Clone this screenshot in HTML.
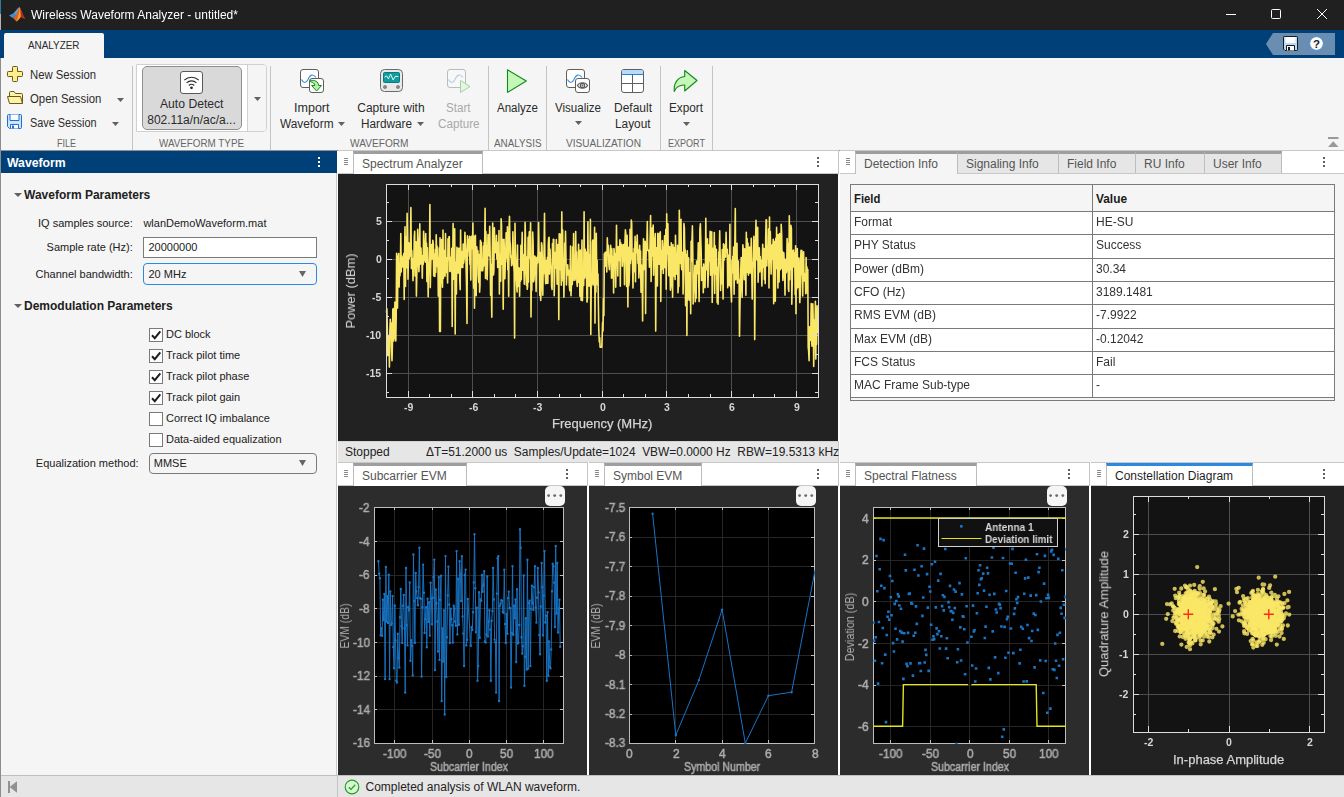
<!DOCTYPE html>
<html lang="en"><head><meta charset="utf-8"><title>Wireless Waveform Analyzer - untitled*</title>
<style>
html,body{margin:0;padding:0}
body{width:1344px;height:797px;overflow:hidden;background:#f0f0f0;font-family:"Liberation Sans",Arial,sans-serif;position:relative}
#app{position:absolute;left:0;top:0;width:1344px;height:797px;overflow:hidden;background:#fff}
.t{position:absolute;white-space:pre;line-height:14px;display:block}
.a{position:absolute;display:block;overflow:visible}
</style></head>
<body><div id="app">
<div style="position:absolute;left:0px;top:0px;width:1344px;height:30px;background:#202020"></div>
<div style="position:absolute;left:0px;top:0px;width:1px;height:14px;background:#2e7aa6"></div>
<div style="position:absolute;left:0px;top:14px;width:1px;height:16px;background:#b4b4b4"></div>
<svg class="a" style="left:8px;top:6px" width="18" height="17" viewBox="0 0 18 17"><path d="M1 9.5 L5.5 7.2 L8 9.6 L5.2 12.2 Z" fill="#3f8fd0"/><path d="M5.5 7.2 C7.5 5.6 9 2.5 11.6 0.8 L9.6 9.8 L8 9.6 Z" fill="#5aa0d8"/><path d="M11.6 0.8 C13.2 3.5 14.6 9 17 12.8 C15.4 12.4 14 11.6 12.8 10.8 C11.6 12.4 10.4 14.4 8.2 15.6 C7.6 14.2 6.4 13 5.2 12.2 C7.4 10.8 9.6 6 11.6 0.8 Z" fill="#e2621d"/><path d="M11.6 0.8 C12.6 4 13 8 12.8 10.8 C11.6 12.4 10.4 14.4 8.2 15.6 C10.4 12 11.2 6 11.6 0.8 Z" fill="#f2a02e"/><path d="M11.6 0.8 C13.2 3.5 14.6 9 17 12.8 C15.4 12.4 14 11.6 12.8 10.8 C13 8 12.6 4 11.6 0.8 Z" fill="#b5281e"/></svg>
<span class="t" style="left:31.00px;top:8.00px;font-size:12px;color:#fff;will-change:transform;">Wireless Waveform Analyzer - untitled*</span>
<div style="position:absolute;left:1226px;top:14px;width:10px;height:1px;background:#fff"></div>
<div style="position:absolute;left:1271px;top:9px;width:10px;height:10px;border:1px solid #fff;border-radius:1.5px;box-sizing:border-box"></div>
<svg class="a" style="left:1316px;top:8px" width="12" height="12" viewBox="0 0 12 12"><path d="M1 1L11 11M11 1L1 11" stroke="#fff" stroke-width="1" fill="none"/></svg>
<div style="position:absolute;left:0px;top:30px;width:1344px;height:28px;background:#004078"></div>
<div style="position:absolute;left:4px;top:33px;width:100px;height:25px;background:#f5f5f5;border-radius:2px 2px 0 0"></div>
<span class="t" style="left:28.25px;top:38.00px;font-size:11px;color:#2a2a2a;transform:scale(0.8994,1.0000);transform-origin:0 11px;">ANALYZER</span>
<svg class="a" style="left:1266px;top:33px" width="70" height="22" viewBox="0 0 70 22"><path d="M0 11L7 0H69V22H7Z" fill="#6a8eb2"/></svg>
<svg class="a" style="left:1283px;top:36px" width="15" height="15" viewBox="0 0 15 15"><path d="M1.2 0.5H13.8A0.7 0.7 0 0 1 14.5 1.2V13.8A0.7 0.7 0 0 1 13.8 14.5H2L0.5 13V1.2A0.7 0.7 0 0 1 1.2 0.5Z" fill="#b7dcfb" stroke="#1b1b1b" stroke-width="1"/><rect x="2.5" y="1" width="10" height="6" fill="#fff" stroke="#1b1b1b" stroke-width="0"/><path d="M3.5 14.5V9.5H11.5V14.5" fill="#fff" stroke="#1b1b1b" stroke-width="1"/><rect x="5" y="11" width="2" height="3.5" fill="#1b1b1b"/></svg>
<svg class="a" style="left:1309px;top:36px" width="16" height="16" viewBox="0 0 16 16"><circle cx="7.5" cy="7.5" r="6.8" fill="#fff" stroke="#3f8fe0" stroke-width="0.8"/><text x="7.5" y="11.6" font-family="Liberation Sans, sans-serif" font-size="11.5" font-weight="bold" text-anchor="middle" fill="#1b1b1b">?</text></svg>
<div style="position:absolute;left:0px;top:58px;width:1344px;height:92px;background:#f5f5f5"></div>
<div style="position:absolute;left:0px;top:150px;width:1344px;height:1px;background:#909090"></div>
<div style="position:absolute;left:0px;top:58px;width:1px;height:739px;background:#bdbdbd"></div>
<svg class="a" style="left:6px;top:65px" width="18" height="18" viewBox="0 0 18 18"><path d="M7.3 1.5H10.7A0.8 0.8 0 0 1 11.5 2.3V6.5H15.7A0.8 0.8 0 0 1 16.5 7.3V10.7A0.8 0.8 0 0 1 15.7 11.5H11.5V15.7A0.8 0.8 0 0 1 10.7 16.5H7.3A0.8 0.8 0 0 1 6.5 15.7V11.5H2.3A0.8 0.8 0 0 1 1.5 10.7V7.3A0.8 0.8 0 0 1 2.3 6.5H6.5V2.3A0.8 0.8 0 0 1 7.3 1.5Z" fill="#fdf08c" stroke="#6e5712" stroke-width="1"/></svg>
<span class="t" style="left:29.50px;top:68.00px;font-size:12px;color:#2b2b2b;transform:scale(0.9424,1.0000);transform-origin:0 11px;">New Session</span>
<svg class="a" style="left:6px;top:90px" width="18" height="15" viewBox="0 0 18 15"><path d="M3.5 7V2.5Q3.5 1.5 4.5 1.5H8L9.5 3.5H15.5Q16.5 3.5 16.5 4.5V13.5H4" fill="#fdf3a8" stroke="#6e5712" stroke-width="1" stroke-linejoin="round"/><path d="M1.5 6.5H14.5L16.5 13.5H3.5Z" fill="#fdf3a8" stroke="#6e5712" stroke-width="1" stroke-linejoin="round"/></svg>
<span class="t" style="left:29.50px;top:92.00px;font-size:12px;color:#2b2b2b;transform:scale(0.9459,1.0000);transform-origin:0 11px;">Open Session</span>
<svg class="a" style="left:116.5px;top:97.5px" width="7" height="4" viewBox="0 0 7 4"><path d="M0 0H7L3.5 4Z" fill="#616161"/></svg>
<svg class="a" style="left:7px;top:114px" width="16" height="16" viewBox="0 0 16 16"><path d="M1.5 0.5H13.5Q14.5 0.5 14.5 1.5V13.5Q14.5 14.5 13.5 14.5H2.5L0.5 12.5V1.5Q0.5 0.5 1.5 0.5Z" fill="#cde4fb" stroke="#1d6fd3" stroke-width="1"/><path d="M3 0.5V6.5H12V0.5" fill="#fff" stroke="#1d6fd3" stroke-width="1"/><path d="M3.5 14.5V10.5H11.5V14.5" fill="#fff" stroke="#1d6fd3" stroke-width="1"/><rect x="5" y="11.5" width="2" height="3" fill="#1d6fd3"/></svg>
<span class="t" style="left:29.50px;top:116.00px;font-size:12px;color:#2b2b2b;transform:scale(0.9076,1.0000);transform-origin:0 11px;">Save Session</span>
<svg class="a" style="left:111.5px;top:121.5px" width="7" height="4" viewBox="0 0 7 4"><path d="M0 0H7L3.5 4Z" fill="#616161"/></svg>
<span class="t" style="left:57.00px;top:136.00px;font-size:11px;color:#666;transform:scale(0.8179,1.0000);transform-origin:0 11px;">FILE</span>
<div style="position:absolute;left:132px;top:66px;width:1px;height:84px;background:#c4c4c4"></div>
<div style="position:absolute;left:136px;top:64px;width:131px;height:68px;background:#fff;border:1px solid #d0d0d0;border-radius:0 4px 4px 0;box-sizing:border-box"></div>
<div style="position:absolute;left:247px;top:65px;width:19px;height:66px;background:#f5f5f5;border-left:1px solid #d0d0d0;border-radius:0 3px 3px 0;box-sizing:border-box"></div>
<div style="position:absolute;left:142px;top:66px;width:100px;height:64px;background:#d9d9d9;border:1px solid #8f8f8f;border-radius:5px;box-sizing:border-box"></div>
<svg class="a" style="left:180px;top:71px" width="23" height="23" viewBox="0 0 23 23"><rect x="0.5" y="0.5" width="22" height="22" rx="2.5" fill="#fff" stroke="#5a5a5a" stroke-width="1"/><path d="M4.3 9.2A10.3 10.3 0 0 1 18.7 9.2" fill="none" stroke="#2a2a2a" stroke-width="1.1"/><path d="M6.6 11.9A7 7 0 0 1 16.4 11.9" fill="none" stroke="#2a2a2a" stroke-width="1.1"/><path d="M8.8 14.5A3.9 3.9 0 0 1 14.2 14.5" fill="none" stroke="#2a2a2a" stroke-width="1.1"/><circle cx="11.5" cy="16.8" r="1.4" fill="#2a2a2a"/></svg>
<span class="t" style="left:160.25px;top:97.00px;font-size:12px;color:#2b2b2b;transform:scale(1.0127,1.0000);transform-origin:0 11px;">Auto Detect</span>
<span class="t" style="left:147.25px;top:113.00px;font-size:12px;color:#2b2b2b;">802.11a/n/ac/a...</span>
<svg class="a" style="left:253.5px;top:97.0px" width="7" height="4" viewBox="0 0 7 4"><path d="M0 0H7L3.5 4Z" fill="#616161"/></svg>
<span class="t" style="left:159.00px;top:136.00px;font-size:11px;color:#666;transform:scale(0.8934,1.0000);transform-origin:0 11px;">WAVEFORM TYPE</span>
<div style="position:absolute;left:270px;top:66px;width:1px;height:84px;background:#c4c4c4"></div>
<svg class="a" style="left:300px;top:69px" width="24" height="24" viewBox="0 0 24 24"><rect x="0.5" y="0.5" width="18" height="18" rx="2.5" fill="#fff" stroke="#5f5f5f" stroke-width="1" opacity="1"/><path d="M1.5 10.5C3.5 14.5 6 14.5 8 10.5C10 5.5 13 4.5 16 8.5" fill="none" stroke="#3a8fe0" stroke-width="1.1" opacity="1"/><rect x="9.5" y="9.5" width="14" height="14" rx="2.5" fill="#fff" stroke="#5f5f5f" stroke-width="1"/><path d="M10.2 11.4C14.8 10.8 18.4 12.6 18.6 16.5H21.6L16.6 22L11.6 16.5H14.9C14.6 14.4 13.2 13.2 10.2 12.7Z" fill="#b6f0a8" stroke="#178a17" stroke-width="1" stroke-linejoin="round"/></svg>
<span class="t" style="left:293.75px;top:101.00px;font-size:12px;color:#2b2b2b;transform:scale(1.0439,1.0000);transform-origin:0 11px;">Import</span>
<span class="t" style="left:279.75px;top:117.00px;font-size:12px;color:#2b2b2b;transform:scale(0.9866,1.0000);transform-origin:0 11px;">Waveform</span>
<svg class="a" style="left:338.0px;top:122.0px" width="7" height="4" viewBox="0 0 7 4"><path d="M0 0H7L3.5 4Z" fill="#616161"/></svg>
<svg class="a" style="left:380px;top:69px" width="24" height="24" viewBox="0 0 24 24"><rect x="0.5" y="0.5" width="22" height="22" rx="4" fill="#e9e9e9" stroke="#6a6a6a" stroke-width="1"/><rect x="3.5" y="3.5" width="16" height="10" rx="1" fill="#0f9c9e" stroke="#0a7a80" stroke-width="1"/><path d="M4.5 8.2L6.6 6.9L8.4 9.8L10.6 5.2L13.1 10.9L15.4 7.3L18.5 7.6" fill="none" stroke="#fff" stroke-width="0.9" stroke-linejoin="round"/><circle cx="5" cy="18" r="1.6" fill="#8b8b8b" stroke="#6a6a6a" stroke-width="0.6"/><circle cx="18" cy="18" r="1.6" fill="#8b8b8b" stroke="#6a6a6a" stroke-width="0.6"/></svg>
<span class="t" style="left:357.25px;top:101.00px;font-size:12px;color:#2b2b2b;">Capture with</span>
<span class="t" style="left:361.00px;top:117.00px;font-size:12px;color:#2b2b2b;transform:scale(0.9804,1.0000);transform-origin:0 11px;">Hardware</span>
<svg class="a" style="left:416.5px;top:122.0px" width="7" height="4" viewBox="0 0 7 4"><path d="M0 0H7L3.5 4Z" fill="#616161"/></svg>
<svg class="a" style="left:447px;top:69px;opacity:.38" width="24" height="24" viewBox="0 0 24 24"><rect x="0.5" y="0.5" width="18" height="18" rx="2.5" fill="#fff" stroke="#5f5f5f" stroke-width="1" opacity="1"/><path d="M1.5 10.5C3.5 14.5 6 14.5 8 10.5C10 5.5 13 4.5 16 8.5" fill="none" stroke="#3a8fe0" stroke-width="1.1" opacity="1"/><path d="M13.5 11.5L23 17.5L13.5 23.5Z" fill="#c9f7c3" stroke="#1f9a1f" stroke-width="1"/></svg>
<span class="t" style="left:446.25px;top:101.00px;font-size:12px;color:#a9a9a9;transform:scale(0.9668,1.0000);transform-origin:0 11px;">Start</span>
<span class="t" style="left:437.75px;top:117.00px;font-size:12px;color:#a9a9a9;transform:scale(0.9721,1.0000);transform-origin:0 11px;">Capture</span>
<span class="t" style="left:350.25px;top:136.00px;font-size:11px;color:#666;transform:scale(0.9205,1.0000);transform-origin:0 11px;">WAVEFORM</span>
<div style="position:absolute;left:488px;top:66px;width:1px;height:84px;background:#c4c4c4"></div>
<svg class="a" style="left:506px;top:68px" width="22" height="26" viewBox="0 0 22 26"><path d="M1.5 1.8L20.3 13L1.5 24.4Z" fill="#c4f7b8" stroke="#108a18" stroke-width="1.1" stroke-linejoin="round"/></svg>
<span class="t" style="left:497.00px;top:101.00px;font-size:12px;color:#2b2b2b;transform:scale(0.9604,1.0000);transform-origin:0 11px;">Analyze</span>
<span class="t" style="left:493.75px;top:136.00px;font-size:11px;color:#666;transform:scale(0.8964,1.0000);transform-origin:0 11px;">ANALYSIS</span>
<div style="position:absolute;left:546px;top:66px;width:1px;height:84px;background:#c4c4c4"></div>
<svg class="a" style="left:566px;top:69px" width="24" height="24" viewBox="0 0 24 24"><rect x="0.5" y="0.5" width="18" height="18" rx="2.5" fill="#fff" stroke="#5f5f5f" stroke-width="1" opacity="1"/><path d="M1.5 10.5C3.5 14.5 6 14.5 8 10.5C10 5.5 13 4.5 16 8.5" fill="none" stroke="#3a8fe0" stroke-width="1.1" opacity="1"/><rect x="9.5" y="9.5" width="14" height="14" rx="2.5" fill="#fff" stroke="#5f5f5f" stroke-width="1"/><path d="M11.4 16.5C13.4 12.9 19.6 12.9 21.6 16.5C19.6 20.1 13.4 20.1 11.4 16.5Z" fill="#fff" stroke="#5a5a5a" stroke-width="1.1"/><circle cx="16.5" cy="16.5" r="2.1" fill="#fff" stroke="#5a5a5a" stroke-width="1.2"/><circle cx="16.5" cy="16.5" r="0.9" fill="#5a5a5a"/></svg>
<span class="t" style="left:555.00px;top:101.00px;font-size:12px;color:#2b2b2b;transform:scale(0.9622,1.0000);transform-origin:0 11px;">Visualize</span>
<svg class="a" style="left:574.5px;top:121.0px" width="7" height="4" viewBox="0 0 7 4"><path d="M0 0H7L3.5 4Z" fill="#616161"/></svg>
<svg class="a" style="left:621px;top:69px" width="24" height="24" viewBox="0 0 24 24"><rect x="0.5" y="0.5" width="22" height="23" rx="2.5" fill="#fff" stroke="#5f5f5f" stroke-width="1"/><path d="M1 3A2 2 0 0 1 3 1H20A2 2 0 0 1 22 3V5H1Z" fill="#b7dcfb"/><path d="M0.5 5.5H22.5" stroke="#2f7fd6" stroke-width="1"/><path d="M11.5 5.5V23.5M0.5 14.5H22.5" stroke="#5f5f5f" stroke-width="1"/></svg>
<span class="t" style="left:614.00px;top:101.00px;font-size:12px;color:#2b2b2b;">Default</span>
<span class="t" style="left:615.25px;top:117.00px;font-size:12px;color:#2b2b2b;transform:scale(0.9853,1.0000);transform-origin:0 11px;">Layout</span>
<span class="t" style="left:565.50px;top:136.00px;font-size:11px;color:#666;transform:scale(0.9179,1.0000);transform-origin:0 11px;">VISUALIZATION</span>
<div style="position:absolute;left:660px;top:66px;width:1px;height:84px;background:#c4c4c4"></div>
<svg class="a" style="left:673px;top:69px" width="25" height="24" viewBox="0 0 25 24"><path d="M11.7 1.5L24 11.5L11.7 22V16C6.5 15.8 3 18 1.2 22.5C0.6 14 4.5 8.2 11.7 7.5Z" fill="#c4f7b8" stroke="#108a18" stroke-width="1.1" stroke-linejoin="round"/></svg>
<span class="t" style="left:669.00px;top:101.00px;font-size:12px;color:#2b2b2b;transform:scale(0.9803,1.0000);transform-origin:0 11px;">Export</span>
<svg class="a" style="left:683.0px;top:122.0px" width="7" height="4" viewBox="0 0 7 4"><path d="M0 0H7L3.5 4Z" fill="#616161"/></svg>
<span class="t" style="left:668.00px;top:136.00px;font-size:11px;color:#666;transform:scale(0.8216,1.0000);transform-origin:0 11px;">EXPORT</span>
<div style="position:absolute;left:712px;top:66px;width:1px;height:84px;background:#c4c4c4"></div>
<svg class="a" style="left:1328px;top:137px" width="11" height="10" viewBox="0 0 11 10"><rect x="0" y="0" width="10.5" height="2" fill="#9a9a9a"/><path d="M0 10L5.25 4.2L10.5 10Z" fill="#9a9a9a"/></svg>
<div style="position:absolute;left:1px;top:151px;width:336px;height:22px;background:#004078"></div>
<span class="t" style="left:7.00px;top:156.00px;font-size:12px;color:#fff;font-weight:bold;transform:scale(1.0197,1.0000);transform-origin:0 11px;">Waveform</span>
<svg class="a" style="left:318.0px;top:157.0px" width="2" height="10" viewBox="0 0 2 10"><rect x="0" y="0" width="2" height="2" fill="#fff"/><rect x="0" y="4" width="2" height="2" fill="#fff"/><rect x="0" y="8" width="2" height="2" fill="#fff"/></svg>
<div style="position:absolute;left:1px;top:173px;width:336px;height:602px;background:#f5f5f5"></div>
<div style="position:absolute;left:336px;top:173px;width:1px;height:602px;background:#c9c9c9"></div>
<svg class="a" style="left:14.0px;top:193.0px" width="8" height="4" viewBox="0 0 8 4"><path d="M0 0H8L4.0 4Z" fill="#616161"/></svg>
<span class="t" style="left:24.00px;top:188.00px;font-size:12px;color:#212121;font-weight:bold;">Waveform Parameters</span>
<span class="t" style="left:38.04px;top:216.00px;font-size:11px;color:#212121;">IQ samples source:</span>
<span class="t" style="left:143.40px;top:216.00px;font-size:11px;color:#212121;">wlanDemoWaveform.mat</span>
<span class="t" style="left:46.60px;top:240.00px;font-size:11px;color:#212121;">Sample rate (Hz):</span>
<div style="position:absolute;left:143px;top:237px;width:174px;height:21px;background:#fff;border:1px solid #7a7a7a;box-sizing:border-box"></div>
<span class="t" style="left:148.50px;top:240.00px;font-size:11px;color:#212121;">20000000</span>
<span class="t" style="left:35.55px;top:267.00px;font-size:11px;color:#212121;">Channel bandwidth:</span>
<div style="position:absolute;left:143px;top:263px;width:174px;height:22px;background:#f5f5f5;border:1px solid #2a8ae0;border-radius:4px;box-sizing:border-box"></div>
<span class="t" style="left:148.50px;top:267.00px;font-size:11px;color:#212121;">20 MHz</span>
<svg class="a" style="left:298.5px;top:271.0px" width="7" height="6" viewBox="0 0 7 6"><path d="M0 0H7L3.5 6Z" fill="#666"/></svg>
<svg class="a" style="left:14.0px;top:304.0px" width="8" height="4" viewBox="0 0 8 4"><path d="M0 0H8L4.0 4Z" fill="#616161"/></svg>
<span class="t" style="left:24.00px;top:299.00px;font-size:12px;color:#212121;font-weight:bold;">Demodulation Parameters</span>
<div style="position:absolute;left:149px;top:328px;width:14px;height:14px;background:#fff;border:1px solid #7a7a7a;box-sizing:border-box"><svg width="12" height="12" viewBox="0 0 12 12" style="display:block"><path d="M2 6.2L4.8 9.2L10.3 2.4" fill="none" stroke="#1e1e1e" stroke-width="2"/></svg></div>
<span class="t" style="left:166.00px;top:327.00px;font-size:11px;color:#212121;">DC block</span>
<div style="position:absolute;left:149px;top:349px;width:14px;height:14px;background:#fff;border:1px solid #7a7a7a;box-sizing:border-box"><svg width="12" height="12" viewBox="0 0 12 12" style="display:block"><path d="M2 6.2L4.8 9.2L10.3 2.4" fill="none" stroke="#1e1e1e" stroke-width="2"/></svg></div>
<span class="t" style="left:166.00px;top:348.00px;font-size:11px;color:#212121;">Track pilot time</span>
<div style="position:absolute;left:149px;top:370px;width:14px;height:14px;background:#fff;border:1px solid #7a7a7a;box-sizing:border-box"><svg width="12" height="12" viewBox="0 0 12 12" style="display:block"><path d="M2 6.2L4.8 9.2L10.3 2.4" fill="none" stroke="#1e1e1e" stroke-width="2"/></svg></div>
<span class="t" style="left:166.00px;top:369.00px;font-size:11px;color:#212121;">Track pilot phase</span>
<div style="position:absolute;left:149px;top:391px;width:14px;height:14px;background:#fff;border:1px solid #7a7a7a;box-sizing:border-box"><svg width="12" height="12" viewBox="0 0 12 12" style="display:block"><path d="M2 6.2L4.8 9.2L10.3 2.4" fill="none" stroke="#1e1e1e" stroke-width="2"/></svg></div>
<span class="t" style="left:166.00px;top:390.00px;font-size:11px;color:#212121;">Track pilot gain</span>
<div style="position:absolute;left:149px;top:412px;width:14px;height:14px;background:#fff;border:1px solid #7a7a7a;box-sizing:border-box"></div>
<span class="t" style="left:166.00px;top:411.00px;font-size:11px;color:#212121;">Correct IQ imbalance</span>
<div style="position:absolute;left:149px;top:433px;width:14px;height:14px;background:#fff;border:1px solid #7a7a7a;box-sizing:border-box"></div>
<span class="t" style="left:166.00px;top:432.00px;font-size:11px;color:#212121;">Data-aided equalization</span>
<span class="t" style="left:35.86px;top:456.00px;font-size:11px;color:#212121;">Equalization method:</span>
<div style="position:absolute;left:149px;top:453px;width:168px;height:21px;background:#f5f5f5;border:1px solid #7a7a7a;border-radius:4px;box-sizing:border-box"></div>
<span class="t" style="left:153.80px;top:456.00px;font-size:11px;color:#212121;">MMSE</span>
<svg class="a" style="left:298.5px;top:460.0px" width="7" height="6" viewBox="0 0 7 6"><path d="M0 0H7L3.5 6Z" fill="#666"/></svg>
<div style="position:absolute;left:338px;top:150px;width:501px;height:1px;background:#c8c8c8"></div>
<div style="position:absolute;left:338px;top:151px;width:501px;height:23px;background:#fff;border-bottom:1px solid #c8c8c8;box-sizing:border-box"></div>
<div style="position:absolute;left:338px;top:151px;width:16px;height:22px;border-right:1px solid #c8c8c8;box-sizing:border-box"></div>
<svg class="a" style="left:344px;top:158px" width="4" height="7" viewBox="0 0 4 7"><rect x="0" y="0" width="4" height="1" fill="#8a8a8a"/><rect x="0" y="2" width="4" height="1" fill="#8a8a8a"/><rect x="0" y="4" width="4" height="1" fill="#8a8a8a"/><rect x="0" y="6" width="4" height="1" fill="#8a8a8a"/></svg>
<div style="position:absolute;left:353px;top:151px;width:130px;height:23px;background:#fff;border-left:1px solid #bdbdbd;border-right:1px solid #bdbdbd;border-top:3px solid #9e9e9e;box-sizing:border-box"></div>
<span class="t" style="left:362.00px;top:157.00px;font-size:12px;color:#555;">Spectrum Analyzer</span>
<svg class="a" style="left:817.0px;top:157.0px" width="2" height="10" viewBox="0 0 2 10"><rect x="0" y="0" width="2" height="2" fill="#606060"/><rect x="0" y="4" width="2" height="2" fill="#606060"/><rect x="0" y="8" width="2" height="2" fill="#606060"/></svg>
<div style="position:absolute;left:838px;top:151px;width:1px;height:23px;background:#c4c4c4"></div>
<svg class="a" style="left:338px;top:174px" width="500" height="267" viewBox="338 174 500 267"><rect x="338" y="174" width="500" height="267" fill="#222"/><rect x="386" y="184" width="432" height="213" fill="#131313"/><path d="M408.5 184V397M472.5 184V397M537.5 184V397M602.5 184V397M666.5 184V397M731.5 184V397M796.5 184V397M386 221.5H818M386 259.5H818M386 297.5H818M386 335.5H818M386 373.5H818" stroke="#4e4e4e" stroke-width="1" fill="none"/><polyline points="386.5,312.5 386.9,308.9 387.3,327.8 387.8,355.6 388.2,345.0 388.6,349.7 389.0,335.5 389.4,367.1 389.9,329.8 390.3,319.2 390.7,334.9 391.1,322.8 391.6,350.6 392.0,360.8 392.4,344.6 392.8,309.0 393.2,311.6 393.7,341.0 394.1,308.1 394.5,338.4 394.9,302.0 395.3,322.4 395.8,340.9 396.2,316.2 396.6,253.3 397.0,260.3 397.5,308.1 397.9,267.3 398.3,257.1 398.7,253.6 399.1,287.1 399.6,265.5 400.0,275.7 400.4,266.6 400.8,233.6 401.2,271.9 401.7,255.9 402.1,260.2 402.5,267.0 402.9,257.2 403.4,258.4 403.8,253.5 404.2,299.5 404.6,253.1 405.0,226.7 405.5,286.5 405.9,236.9 406.3,252.1 406.7,267.8 407.1,213.4 407.6,238.9 408.0,279.2 408.4,259.6 408.8,242.7 409.2,258.4 409.7,246.9 410.1,256.0 410.5,240.9 410.9,207.6 411.4,268.6 411.8,250.5 412.2,264.3 412.6,258.5 413.0,280.7 413.5,266.8 413.9,259.0 414.3,236.5 414.7,231.4 415.1,276.0 415.6,271.4 416.0,241.8 416.4,296.1 416.8,274.4 417.3,257.2 417.7,229.4 418.1,241.1 418.5,262.0 418.9,271.6 419.4,259.7 419.8,223.9 420.2,264.1 420.6,261.5 421.0,248.0 421.5,263.9 421.9,259.3 422.3,278.2 422.7,255.5 423.2,264.4 423.6,231.2 424.0,241.8 424.4,255.7 424.8,260.1 425.3,262.1 425.7,233.5 426.1,255.2 426.5,243.0 426.9,281.6 427.4,247.9 427.8,271.1 428.2,296.8 428.6,270.9 429.1,273.4 429.5,251.5 429.9,204.5 430.3,287.6 430.7,267.6 431.2,250.6 431.6,244.6 432.0,258.4 432.4,259.0 432.8,240.3 433.3,244.0 433.7,276.0 434.1,256.4 434.5,254.0 434.9,276.5 435.4,249.4 435.8,272.5 436.2,234.8 436.6,250.9 437.1,246.1 437.5,267.1 437.9,257.4 438.3,296.1 438.7,278.3 439.2,247.7 439.6,331.4 440.0,237.8 440.4,331.5 440.8,239.8 441.3,272.8 441.7,239.5 442.1,280.1 442.5,287.3 443.0,230.0 443.4,278.5 443.8,257.3 444.2,250.6 444.6,250.8 445.1,276.2 445.5,233.6 445.9,267.5 446.3,257.5 446.7,272.8 447.2,269.5 447.6,283.0 448.0,238.7 448.4,260.0 448.9,237.0 449.3,236.5 449.7,271.4 450.1,263.9 450.5,268.7 451.0,257.1 451.4,272.0 451.8,248.4 452.2,326.4 452.6,274.1 453.1,223.5 453.5,271.4 453.9,279.3 454.3,250.7 454.7,228.7 455.2,333.9 455.6,262.0 456.0,270.7 456.4,294.0 456.9,247.2 457.3,258.2 457.7,256.3 458.1,273.2 458.5,248.3 459.0,268.7 459.4,248.3 459.8,280.4 460.2,289.6 460.6,230.0 461.1,267.8 461.5,251.3 461.9,257.9 462.3,266.2 462.8,267.5 463.2,244.0 463.6,263.1 464.0,259.9 464.4,256.2 464.9,232.4 465.3,242.4 465.7,249.1 466.1,267.8 466.5,284.5 467.0,323.5 467.4,235.9 467.8,256.1 468.2,244.3 468.7,239.2 469.1,250.8 469.5,236.4 469.9,264.2 470.3,253.2 470.8,280.1 471.2,236.6 471.6,244.0 472.0,236.0 472.4,248.7 472.9,223.1 473.3,277.0 473.7,288.2 474.1,236.3 474.5,308.2 475.0,253.0 475.4,235.3 475.8,286.2 476.2,295.6 476.7,246.7 477.1,251.0 477.5,256.8 477.9,250.8 478.3,275.0 478.8,282.5 479.2,254.6 479.6,292.1 480.0,284.7 480.4,240.4 480.9,251.9 481.3,242.2 481.7,270.8 482.1,263.9 482.6,270.8 483.0,268.4 483.4,246.1 483.8,266.1 484.2,242.6 484.7,242.9 485.1,208.2 485.5,278.5 485.9,231.5 486.3,251.6 486.8,250.0 487.2,279.6 487.6,259.2 488.0,234.5 488.5,251.5 488.9,248.2 489.3,255.9 489.7,226.2 490.1,250.4 490.6,295.3 491.0,264.4 491.4,290.7 491.8,317.2 492.2,261.3 492.7,223.1 493.1,249.7 493.5,274.9 493.9,270.3 494.4,227.8 494.8,248.0 495.2,250.4 495.6,252.6 496.0,250.9 496.5,235.3 496.9,258.9 497.3,247.8 497.7,267.5 498.1,242.2 498.6,267.0 499.0,230.6 499.4,293.9 499.8,256.4 500.2,254.0 500.7,281.3 501.1,218.9 501.5,224.5 501.9,264.3 502.4,239.2 502.8,247.5 503.2,309.3 503.6,270.1 504.0,239.3 504.5,254.6 504.9,278.7 505.3,262.4 505.7,261.8 506.1,232.9 506.6,250.7 507.0,258.0 507.4,226.7 507.8,269.8 508.3,266.7 508.7,296.3 509.1,226.8 509.5,216.4 509.9,240.7 510.4,246.1 510.8,257.8 511.2,255.9 511.6,265.7 512.0,264.9 512.5,259.8 512.9,231.8 513.3,249.9 513.7,262.7 514.2,273.6 514.6,338.1 515.0,223.3 515.4,251.8 515.8,261.0 516.3,277.3 516.7,285.5 517.1,292.0 517.5,245.0 517.9,286.6 518.4,267.8 518.8,267.8 519.2,273.6 519.6,296.2 520.0,268.4 520.5,281.2 520.9,245.4 521.3,279.6 521.7,251.9 522.2,232.4 522.6,270.3 523.0,254.2 523.4,259.9 523.8,263.9 524.3,284.3 524.7,254.4 525.1,222.4 525.5,238.3 525.9,267.9 526.4,285.2 526.8,257.1 527.2,289.3 527.6,286.4 528.1,237.2 528.5,282.1 528.9,241.1 529.3,231.9 529.7,257.9 530.2,246.4 530.6,222.9 531.0,316.9 531.4,275.1 531.8,290.6 532.3,261.8 532.7,232.1 533.1,242.7 533.5,281.7 534.0,279.8 534.4,272.5 534.8,256.0 535.2,266.1 535.6,257.3 536.1,291.4 536.5,267.7 536.9,262.2 537.3,257.1 537.7,262.9 538.2,250.7 538.6,222.5 539.0,248.7 539.4,259.6 539.8,295.4 540.3,252.6 540.7,300.5 541.1,289.4 541.5,242.7 542.0,245.7 542.4,263.2 542.8,295.2 543.2,267.6 543.6,273.9 544.1,246.8 544.5,213.4 544.9,255.3 545.3,275.8 545.7,283.8 546.2,260.8 546.6,263.3 547.0,283.3 547.4,257.2 547.9,283.3 548.3,244.7 548.7,237.7 549.1,237.3 549.5,274.1 550.0,249.1 550.4,262.4 550.8,267.7 551.2,266.7 551.6,286.5 552.1,289.5 552.5,243.6 552.9,263.9 553.3,239.3 553.8,239.5 554.2,295.8 554.6,276.4 555.0,256.7 555.4,252.4 555.9,268.3 556.3,239.5 556.7,256.4 557.1,284.2 557.5,280.1 558.0,244.5 558.4,258.8 558.8,319.6 559.2,233.7 559.6,249.1 560.1,234.0 560.5,269.7 560.9,268.0 561.3,285.2 561.8,211.9 562.2,265.9 562.6,229.7 563.0,280.9 563.4,259.3 563.9,297.2 564.3,270.8 564.7,243.0 565.1,264.2 565.5,231.3 566.0,258.8 566.4,284.9 566.8,273.9 567.2,273.1 567.7,264.8 568.1,274.9 568.5,274.7 568.9,270.3 569.3,285.2 569.8,290.7 570.2,270.6 570.6,246.1 571.0,295.8 571.4,285.2 571.9,277.7 572.3,284.5 572.7,246.9 573.1,275.1 573.6,233.6 574.0,280.5 574.4,255.9 574.8,269.1 575.2,279.9 575.7,231.6 576.1,267.5 576.5,251.8 576.9,282.7 577.3,286.5 577.8,266.2 578.2,262.9 578.6,244.2 579.0,282.4 579.5,267.2 579.9,296.2 580.3,250.0 580.7,285.5 581.1,300.3 581.6,264.2 582.0,240.1 582.4,300.7 582.8,284.9 583.2,277.6 583.7,285.4 584.1,211.7 584.5,278.4 584.9,276.4 585.3,249.3 585.8,276.7 586.2,252.0 586.6,280.7 587.0,302.1 587.5,298.0 587.9,221.7 588.3,266.3 588.7,254.5 589.1,286.3 589.6,255.7 590.0,257.7 590.4,219.2 590.8,334.4 591.2,290.0 591.7,278.5 592.1,284.9 592.5,241.8 592.9,240.0 593.4,276.4 593.8,285.0 594.2,263.4 594.6,227.2 595.0,323.1 595.5,244.5 595.9,292.1 596.3,233.4 596.7,276.8 597.1,260.2 597.6,285.1 598.0,274.0 598.4,304.9 598.8,330.4 599.3,342.0 599.7,337.5 600.1,347.2 600.5,347.2 600.9,347.2 601.4,347.2 601.8,347.2 602.2,336.3 602.6,322.4 603.0,331.0 603.5,298.4 603.9,315.7 604.3,253.9 604.7,266.7 605.1,252.2 605.6,263.3 606.0,265.9 606.4,251.8 606.8,271.9 607.3,237.9 607.7,252.5 608.1,245.1 608.5,248.8 608.9,265.2 609.4,269.7 609.8,255.0 610.2,261.4 610.6,245.3 611.0,250.2 611.5,278.2 611.9,248.8 612.3,277.8 612.7,262.9 613.2,256.3 613.6,293.0 614.0,248.5 614.4,254.8 614.8,253.8 615.3,259.4 615.7,287.3 616.1,260.8 616.5,225.3 616.9,262.4 617.4,250.5 617.8,276.0 618.2,246.5 618.6,248.6 619.1,254.6 619.5,260.8 619.9,239.8 620.3,286.3 620.7,242.7 621.2,247.4 621.6,246.7 622.0,244.8 622.4,266.3 622.8,258.3 623.3,256.1 623.7,244.5 624.1,249.2 624.5,284.8 624.9,242.7 625.4,229.9 625.8,233.4 626.2,249.5 626.6,286.5 627.1,235.2 627.5,257.8 627.9,307.0 628.3,247.3 628.7,285.9 629.2,282.0 629.6,268.6 630.0,229.4 630.4,263.4 630.8,250.3 631.3,220.1 631.7,223.3 632.1,258.4 632.5,261.3 633.0,288.0 633.4,253.0 633.8,272.1 634.2,248.6 634.6,254.5 635.1,236.4 635.5,281.7 635.9,250.9 636.3,242.0 636.7,252.5 637.2,235.1 637.6,249.0 638.0,263.6 638.4,249.8 638.9,277.9 639.3,266.8 639.7,245.4 640.1,258.4 640.5,251.0 641.0,292.2 641.4,264.8 641.8,269.6 642.2,275.0 642.6,320.9 643.1,264.1 643.5,238.7 643.9,249.2 644.3,269.4 644.8,257.3 645.2,241.3 645.6,313.6 646.0,259.3 646.4,245.5 646.9,242.6 647.3,221.6 647.7,250.5 648.1,250.0 648.5,250.1 649.0,252.2 649.4,267.2 649.8,256.9 650.2,237.3 650.6,215.6 651.1,281.5 651.5,256.7 651.9,251.5 652.3,227.9 652.8,256.1 653.2,225.1 653.6,275.2 654.0,259.0 654.4,259.2 654.9,238.9 655.3,233.5 655.7,331.1 656.1,273.7 656.5,247.8 657.0,268.3 657.4,286.0 657.8,233.2 658.2,244.4 658.7,262.7 659.1,264.3 659.5,233.3 659.9,259.4 660.3,231.9 660.8,301.4 661.2,260.5 661.6,250.2 662.0,268.9 662.4,240.6 662.9,249.1 663.3,273.5 663.7,253.1 664.1,261.8 664.6,235.8 665.0,267.7 665.4,263.8 665.8,229.4 666.2,289.2 666.7,213.9 667.1,253.9 667.5,250.8 667.9,223.8 668.3,258.1 668.8,275.7 669.2,253.4 669.6,246.6 670.0,268.7 670.4,290.1 670.9,285.9 671.3,242.9 671.7,271.1 672.1,259.8 672.6,297.2 673.0,244.5 673.4,264.4 673.8,247.2 674.2,276.2 674.7,265.5 675.1,279.4 675.5,235.2 675.9,259.3 676.3,274.2 676.8,266.5 677.2,264.0 677.6,245.3 678.0,292.7 678.5,281.5 678.9,286.5 679.3,210.3 679.7,241.2 680.1,263.4 680.6,246.7 681.0,219.3 681.4,266.6 681.8,269.6 682.2,257.2 682.7,252.4 683.1,293.9 683.5,273.5 683.9,223.6 684.4,228.3 684.8,252.0 685.2,249.8 685.6,305.8 686.0,254.2 686.5,268.5 686.9,335.5 687.3,250.9 687.7,273.4 688.1,300.0 688.6,257.9 689.0,293.3 689.4,272.5 689.8,300.6 690.2,273.1 690.7,313.7 691.1,241.3 691.5,261.2 691.9,243.7 692.4,225.9 692.8,251.8 693.2,303.9 693.6,285.3 694.0,291.8 694.5,277.3 694.9,265.4 695.3,301.8 695.7,290.4 696.1,298.2 696.6,261.0 697.0,269.4 697.4,273.6 697.8,267.0 698.3,242.8 698.7,279.6 699.1,301.6 699.5,270.3 699.9,228.9 700.4,223.9 700.8,239.5 701.2,252.1 701.6,280.5 702.0,275.8 702.5,267.5 702.9,267.6 703.3,292.7 703.7,264.0 704.2,274.8 704.6,267.4 705.0,287.8 705.4,273.0 705.8,218.2 706.3,266.4 706.7,269.7 707.1,253.7 707.5,238.8 707.9,287.2 708.4,268.3 708.8,245.0 709.2,253.4 709.6,261.0 710.1,231.3 710.5,275.2 710.9,261.2 711.3,273.4 711.7,231.8 712.2,302.4 712.6,275.8 713.0,272.7 713.4,248.0 713.8,264.5 714.3,232.6 714.7,293.5 715.1,245.5 715.5,259.4 715.9,274.2 716.4,249.3 716.8,279.1 717.2,302.7 717.6,267.5 718.1,304.3 718.5,272.9 718.9,251.7 719.3,252.8 719.7,230.8 720.2,256.6 720.6,290.4 721.0,274.3 721.4,277.5 721.8,283.6 722.3,249.5 722.7,271.6 723.1,298.9 723.5,243.8 724.0,260.4 724.4,250.7 724.8,255.8 725.2,244.9 725.6,257.1 726.1,232.4 726.5,249.1 726.9,249.7 727.3,249.4 727.7,287.8 728.2,261.2 728.6,263.1 729.0,254.7 729.4,285.8 729.9,224.3 730.3,282.5 730.7,282.9 731.1,293.2 731.5,301.9 732.0,260.0 732.4,273.0 732.8,256.4 733.2,271.6 733.6,247.1 734.1,294.3 734.5,259.4 734.9,238.6 735.3,208.6 735.7,279.7 736.2,268.6 736.6,276.5 737.0,243.2 737.4,283.1 737.9,269.5 738.3,261.1 738.7,280.0 739.1,279.7 739.5,336.3 740.0,303.4 740.4,290.1 740.8,269.0 741.2,257.6 741.6,264.6 742.1,297.4 742.5,270.6 742.9,244.8 743.3,249.9 743.8,263.1 744.2,279.8 744.6,248.7 745.0,273.7 745.4,257.3 745.9,295.2 746.3,232.4 746.7,257.8 747.1,238.5 747.5,272.4 748.0,243.3 748.4,275.1 748.8,266.0 749.2,253.7 749.7,247.1 750.1,273.3 750.5,264.8 750.9,256.4 751.3,238.3 751.8,273.3 752.2,299.1 752.6,269.1 753.0,263.0 753.4,261.1 753.9,236.3 754.3,256.9 754.7,339.6 755.1,286.1 755.5,245.6 756.0,220.3 756.4,247.5 756.8,258.1 757.2,260.2 757.7,227.4 758.1,282.3 758.5,265.5 758.9,253.7 759.3,247.8 759.8,272.0 760.2,256.6 760.6,268.6 761.0,260.3 761.4,265.4 761.9,286.1 762.3,263.0 762.7,244.4 763.1,259.1 763.6,267.2 764.0,248.5 764.4,279.6 764.8,251.1 765.2,283.6 765.7,238.4 766.1,219.7 766.5,219.9 766.9,265.9 767.3,246.0 767.8,258.7 768.2,258.9 768.6,229.1 769.0,288.0 769.5,217.1 769.9,261.6 770.3,231.5 770.7,256.5 771.1,274.1 771.6,254.5 772.0,245.0 772.4,259.3 772.8,249.9 773.2,239.2 773.7,303.7 774.1,241.2 774.5,245.2 774.9,256.5 775.3,301.2 775.8,238.2 776.2,268.8 776.6,227.4 777.0,263.3 777.5,234.9 777.9,287.9 778.3,234.8 778.7,272.5 779.1,282.0 779.6,233.5 780.0,253.1 780.4,269.7 780.8,266.9 781.2,224.3 781.7,235.1 782.1,268.5 782.5,251.4 782.9,280.5 783.4,273.3 783.8,252.8 784.2,260.9 784.6,271.4 785.0,295.1 785.5,259.3 785.9,260.2 786.3,272.6 786.7,269.9 787.1,238.5 787.6,257.2 788.0,243.6 788.4,288.6 788.8,291.5 789.3,215.7 789.7,279.7 790.1,246.3 790.5,269.7 790.9,225.3 791.4,228.8 791.8,304.2 792.2,284.2 792.6,250.9 793.0,256.9 793.5,250.1 793.9,267.0 794.3,256.5 794.7,252.7 795.2,294.7 795.6,245.7 796.0,313.7 796.4,254.5 796.8,289.1 797.3,248.5 797.7,273.3 798.1,287.2 798.5,261.6 798.9,258.1 799.4,288.8 799.8,302.6 800.2,294.9 800.6,260.9 801.0,250.4 801.5,274.7 801.9,250.6 802.3,279.0 802.7,296.0 803.2,261.4 803.6,251.8 804.0,281.0 804.4,279.3 804.8,277.9 805.3,273.3 805.7,293.8 806.1,257.6 806.5,284.2 806.9,266.8 807.4,293.6 807.8,269.5 808.2,347.3 808.6,350.5 809.1,360.7 809.5,326.9 809.9,333.0 810.3,333.5 810.7,340.1 811.2,303.5 811.6,340.4 812.0,346.3 812.4,307.3 812.8,303.8 813.3,325.3 813.7,366.5 814.1,343.9 814.5,319.8 815.0,331.6 815.4,301.2 815.8,359.1 816.2,318.5 816.6,344.4 817.1,305.8 817.5,333.5" fill="none" stroke="#fbe766" stroke-width="1.6" stroke-linejoin="round"/><path d="M408.5 397v-6M408.5 184v6M429.5 397v-3M429.5 184v3M451.5 397v-3M451.5 184v3M472.5 397v-6M472.5 184v6M494.5 397v-3M494.5 184v3M515.5 397v-3M515.5 184v3M537.5 397v-6M537.5 184v6M559.5 397v-3M559.5 184v3M580.5 397v-3M580.5 184v3M602.5 397v-6M602.5 184v6M623.5 397v-3M623.5 184v3M645.5 397v-3M645.5 184v3M666.5 397v-6M666.5 184v6M688.5 397v-3M688.5 184v3M710.5 397v-3M710.5 184v3M731.5 397v-6M731.5 184v6M753.5 397v-3M753.5 184v3M774.5 397v-3M774.5 184v3M796.5 397v-6M796.5 184v6M386 392.5h3M818 392.5h-3M386 373.5h6M818 373.5h-6M386 354.5h3M818 354.5h-3M386 335.5h6M818 335.5h-6M386 316.5h3M818 316.5h-3M386 297.5h6M818 297.5h-6M386 278.5h3M818 278.5h-3M386 259.5h6M818 259.5h-6M386 240.5h3M818 240.5h-3M386 221.5h6M818 221.5h-6M386 202.5h3M818 202.5h-3" stroke="#dcdcdc" stroke-width="1" fill="none"/><rect x="386.5" y="184.5" width="432" height="213" fill="none" stroke="#dcdcdc" stroke-width="1"/></svg>
<span class="t" style="left:403.90px;top:399.50px;font-size:10.5px;color:#d6d6d6;font-weight:bold;will-change:transform;">-9</span>
<span class="t" style="left:468.61px;top:399.50px;font-size:10.5px;color:#d6d6d6;font-weight:bold;will-change:transform;">-6</span>
<span class="t" style="left:533.32px;top:399.50px;font-size:10.5px;color:#d6d6d6;font-weight:bold;will-change:transform;">-3</span>
<span class="t" style="left:599.78px;top:399.50px;font-size:10.5px;color:#d6d6d6;font-weight:bold;will-change:transform;">0</span>
<span class="t" style="left:664.49px;top:399.50px;font-size:10.5px;color:#d6d6d6;font-weight:bold;will-change:transform;">3</span>
<span class="t" style="left:729.20px;top:399.50px;font-size:10.5px;color:#d6d6d6;font-weight:bold;will-change:transform;">6</span>
<span class="t" style="left:793.91px;top:399.50px;font-size:10.5px;color:#d6d6d6;font-weight:bold;will-change:transform;">9</span>
<span class="t" style="left:375.66px;top:214.00px;font-size:10.5px;color:#d6d6d6;font-weight:bold;will-change:transform;">5</span>
<span class="t" style="left:375.66px;top:252.10px;font-size:10.5px;color:#d6d6d6;font-weight:bold;will-change:transform;">0</span>
<span class="t" style="left:372.16px;top:290.20px;font-size:10.5px;color:#d6d6d6;font-weight:bold;will-change:transform;">-5</span>
<span class="t" style="left:366.32px;top:328.30px;font-size:10.5px;color:#d6d6d6;font-weight:bold;will-change:transform;">-10</span>
<span class="t" style="left:366.32px;top:366.40px;font-size:10.5px;color:#d6d6d6;font-weight:bold;will-change:transform;">-15</span>
<span class="t" style="left:552.25px;top:417.00px;font-size:13px;color:#d4d4d4;-webkit-text-stroke:0.25px currentColor;will-change:transform;">Frequency (MHz)</span>
<span class="t" style="left:313.27px;top:283.50px;font-size:13px;color:#d8d8d8;transform:rotate(-90deg) scale(0.9888,1);transform-origin:50% 50%;will-change:transform;">Power (dBm)</span>
<div style="position:absolute;left:338px;top:441px;width:500px;height:21px;background:#e6e6e6;border-top:1px solid #d4d4d4;box-sizing:border-box"></div>
<div style="position:absolute;left:838px;top:441px;width:1px;height:21px;background:#c4c4c4"></div>
<span class="t" style="left:345.00px;top:445.00px;font-size:12px;color:#222;">Stopped</span>
<span class="t" style="left:425.50px;top:445.00px;font-size:12px;color:#222;transform:scale(0.9938,1.0000);transform-origin:0 11px;">ΔT=51.2000 us  Samples/Update=1024  VBW=0.0000 Hz  RBW=19.5313 kHz</span>
<div style="position:absolute;left:840px;top:151px;width:504px;height:311px;background:#f5f5f5"></div>
<div style="position:absolute;left:840px;top:150px;width:505px;height:1px;background:#c8c8c8"></div>
<div style="position:absolute;left:840px;top:151px;width:505px;height:23px;background:#fff;border-bottom:1px solid #c8c8c8;box-sizing:border-box"></div>
<div style="position:absolute;left:840px;top:151px;width:16px;height:22px;border-right:1px solid #c8c8c8;box-sizing:border-box"></div>
<svg class="a" style="left:846px;top:158px" width="4" height="7" viewBox="0 0 4 7"><rect x="0" y="0" width="4" height="1" fill="#8a8a8a"/><rect x="0" y="2" width="4" height="1" fill="#8a8a8a"/><rect x="0" y="4" width="4" height="1" fill="#8a8a8a"/><rect x="0" y="6" width="4" height="1" fill="#8a8a8a"/></svg>
<div style="position:absolute;left:855px;top:151px;width:103px;height:23px;background:#f5f5f5;border-left:1px solid #bdbdbd;border-right:1px solid #bdbdbd;border-top:3px solid #9e9e9e;box-sizing:border-box"></div>
<span class="t" style="left:864.00px;top:157.00px;font-size:12px;color:#555;">Detection Info</span>
<div style="position:absolute;left:958px;top:151px;width:101px;height:22px;background:#e6e6e6;border-right:1px solid #bdbdbd;border-top:3px solid #9e9e9e;box-sizing:border-box"></div>
<span class="t" style="left:966.00px;top:157.00px;font-size:12px;color:#555;">Signaling Info</span>
<div style="position:absolute;left:1059px;top:151px;width:77px;height:22px;background:#e6e6e6;border-right:1px solid #bdbdbd;border-top:3px solid #9e9e9e;box-sizing:border-box"></div>
<span class="t" style="left:1067.00px;top:157.00px;font-size:12px;color:#555;">Field Info</span>
<div style="position:absolute;left:1136px;top:151px;width:69px;height:22px;background:#e6e6e6;border-right:1px solid #bdbdbd;border-top:3px solid #9e9e9e;box-sizing:border-box"></div>
<span class="t" style="left:1144.00px;top:157.00px;font-size:12px;color:#555;">RU Info</span>
<div style="position:absolute;left:1205px;top:151px;width:77px;height:22px;background:#e6e6e6;border-right:1px solid #bdbdbd;border-top:3px solid #9e9e9e;box-sizing:border-box"></div>
<span class="t" style="left:1213.00px;top:157.00px;font-size:12px;color:#555;">User Info</span>
<svg class="a" style="left:1323.0px;top:157.0px" width="2" height="10" viewBox="0 0 2 10"><rect x="0" y="0" width="2" height="2" fill="#606060"/><rect x="0" y="4" width="2" height="2" fill="#606060"/><rect x="0" y="8" width="2" height="2" fill="#606060"/></svg>
<div style="position:absolute;left:1344px;top:151px;width:1px;height:23px;background:#c4c4c4"></div>
<div style="position:absolute;left:850px;top:184px;width:485px;height:217px;background:#fff;border:1px solid #7a7a7a;box-sizing:border-box"></div>
<div style="position:absolute;left:851px;top:185px;width:483px;height:26px;background:#f5f5f5"></div>
<div style="position:absolute;left:850px;top:211px;width:485px;height:1px;background:#7a7a7a"></div>
<div style="position:absolute;left:850px;top:234px;width:485px;height:1px;background:#7a7a7a"></div>
<div style="position:absolute;left:850px;top:258px;width:485px;height:1px;background:#7a7a7a"></div>
<div style="position:absolute;left:850px;top:281px;width:485px;height:1px;background:#7a7a7a"></div>
<div style="position:absolute;left:850px;top:304px;width:485px;height:1px;background:#7a7a7a"></div>
<div style="position:absolute;left:850px;top:328px;width:485px;height:1px;background:#7a7a7a"></div>
<div style="position:absolute;left:850px;top:351px;width:485px;height:1px;background:#7a7a7a"></div>
<div style="position:absolute;left:850px;top:374px;width:485px;height:1px;background:#7a7a7a"></div>
<div style="position:absolute;left:850px;top:397px;width:485px;height:1px;background:#7a7a7a"></div>
<div style="position:absolute;left:1092px;top:184px;width:1px;height:214px;background:#7a7a7a"></div>
<div style="position:absolute;left:851px;top:398px;width:483px;height:2px;background:#f5f5f5"></div>
<span class="t" style="left:854.30px;top:192.00px;font-size:12px;color:#1a1a1a;font-weight:bold;transform:scale(0.9392,1.0000);transform-origin:0 11px;">Field</span>
<span class="t" style="left:1096.30px;top:192.00px;font-size:12px;color:#1a1a1a;font-weight:bold;transform:scale(0.9887,1.0000);transform-origin:0 11px;">Value</span>
<span class="t" style="left:854.30px;top:215.00px;font-size:12px;color:#333;will-change:transform;">Format</span>
<span class="t" style="left:1096.30px;top:215.00px;font-size:12px;color:#333;will-change:transform;">HE-SU</span>
<span class="t" style="left:854.30px;top:238.00px;font-size:12px;color:#333;will-change:transform;">PHY Status</span>
<span class="t" style="left:1096.30px;top:238.00px;font-size:12px;color:#333;will-change:transform;">Success</span>
<span class="t" style="left:854.30px;top:262.00px;font-size:12px;color:#333;will-change:transform;">Power (dBm)</span>
<span class="t" style="left:1096.30px;top:262.00px;font-size:12px;color:#333;will-change:transform;">30.34</span>
<span class="t" style="left:854.30px;top:285.00px;font-size:12px;color:#333;will-change:transform;">CFO (Hz)</span>
<span class="t" style="left:1096.30px;top:285.00px;font-size:12px;color:#333;will-change:transform;">3189.1481</span>
<span class="t" style="left:854.30px;top:308.00px;font-size:12px;color:#333;will-change:transform;">RMS EVM (dB)</span>
<span class="t" style="left:1096.30px;top:308.00px;font-size:12px;color:#333;will-change:transform;">-7.9922</span>
<span class="t" style="left:854.30px;top:332.00px;font-size:12px;color:#333;will-change:transform;">Max EVM (dB)</span>
<span class="t" style="left:1096.30px;top:332.00px;font-size:12px;color:#333;will-change:transform;">-0.12042</span>
<span class="t" style="left:854.30px;top:355.00px;font-size:12px;color:#333;will-change:transform;">FCS Status</span>
<span class="t" style="left:1096.30px;top:355.00px;font-size:12px;color:#333;will-change:transform;">Fail</span>
<span class="t" style="left:854.30px;top:378.00px;font-size:12px;color:#333;will-change:transform;">MAC Frame Sub-type</span>
<span class="t" style="left:1096.30px;top:378.00px;font-size:12px;color:#333;will-change:transform;">-</span>
<div style="position:absolute;left:338px;top:462px;width:250px;height:1px;background:#c8c8c8"></div>
<div style="position:absolute;left:338px;top:463px;width:250px;height:23px;background:#fff;border-bottom:1px solid #c8c8c8;box-sizing:border-box"></div>
<div style="position:absolute;left:338px;top:463px;width:16px;height:22px;border-right:1px solid #c8c8c8;box-sizing:border-box"></div>
<svg class="a" style="left:344px;top:470px" width="4" height="7" viewBox="0 0 4 7"><rect x="0" y="0" width="4" height="1" fill="#8a8a8a"/><rect x="0" y="2" width="4" height="1" fill="#8a8a8a"/><rect x="0" y="4" width="4" height="1" fill="#8a8a8a"/><rect x="0" y="6" width="4" height="1" fill="#8a8a8a"/></svg>
<div style="position:absolute;left:353px;top:463px;width:114px;height:23px;background:#fff;border-left:1px solid #bdbdbd;border-right:1px solid #bdbdbd;border-top:3px solid #9e9e9e;box-sizing:border-box"></div>
<span class="t" style="left:362.00px;top:469.00px;font-size:12px;color:#555;">Subcarrier EVM</span>
<svg class="a" style="left:566.0px;top:469.0px" width="2" height="10" viewBox="0 0 2 10"><rect x="0" y="0" width="2" height="2" fill="#606060"/><rect x="0" y="4" width="2" height="2" fill="#606060"/><rect x="0" y="8" width="2" height="2" fill="#606060"/></svg>
<div style="position:absolute;left:587px;top:463px;width:1px;height:23px;background:#c4c4c4"></div>
<svg class="a" style="left:338px;top:486px" width="249" height="289" viewBox="338 486 249 289"><rect x="338" y="486" width="249" height="289" fill="#2c2c2c"/><rect x="374" y="507" width="189" height="236" fill="#000"/><path d="M394.5 507V743M432.5 507V743M469.5 507V743M506.5 507V743M543.5 507V743M374 541.5H563M374 575.5H563M374 608.5H563M374 642.5H563M374 676.5H563M374 709.5H563" stroke="#262626" stroke-width="1" fill="none"/><rect x="374.5" y="507.5" width="189" height="236" fill="none" stroke="#bdbdbd" stroke-width="1"/><path d="M394.5 743v-3M394.5 507v3M432.5 743v-3M432.5 507v3M469.5 743v-3M469.5 507v3M506.5 743v-3M506.5 507v3M543.5 743v-3M543.5 507v3M374 541.5h3M563 541.5h-3M374 575.5h3M563 575.5h-3M374 608.5h3M563 608.5h-3M374 642.5h3M563 642.5h-3M374 676.5h3M563 676.5h-3M374 709.5h3M563 709.5h-3" stroke="#bdbdbd" stroke-width="1" fill="none"/><clipPath id="c338"><rect x="374" y="507" width="190" height="237"/></clipPath><g clip-path="url(#c338)"><polyline points="378.4,561.2 379.2,573.8 379.9,578.2 380.6,635.2 381.4,628.2 382.1,635.8 382.9,599.8 383.6,620.3 384.4,593.9 385.1,679.1 385.9,567.0 386.6,621.6 387.4,596.1 388.1,622.9 388.8,574.7 389.6,679.1 390.3,591.4 391.1,625.1 391.8,623.5 392.6,595.9 393.3,647.0 394.1,668.2 394.8,605.5 395.5,640.5 396.3,680.8 397.0,682.5 397.8,633.8 398.5,657.7 399.3,667.5 400.0,617.3 400.8,589.0 401.5,626.1 402.2,642.9 403.0,605.8 403.7,594.9 404.5,628.3 405.2,692.6 406.0,567.9 406.7,625.3 407.5,645.2 408.2,607.0 409.0,610.3 409.7,582.4 410.4,660.7 411.2,640.2 411.9,646.0 412.7,675.4 413.4,554.5 414.2,601.1 414.9,642.7 415.7,573.0 416.4,591.5 417.2,597.9 417.9,605.3 418.6,587.1 419.4,547.7 420.1,598.3 420.9,598.7 421.6,676.5 422.4,607.1 423.1,564.6 423.9,592.8 424.6,632.9 425.3,619.1 426.1,607.2 426.8,647.2 427.6,598.8 428.3,621.9 429.1,602.3 429.8,635.6 430.6,582.8 431.3,598.6 432.1,624.3 432.8,597.7 433.5,577.1 434.3,559.6 435.0,670.1 435.8,589.5 436.5,603.2 437.3,621.5 438.0,651.5 438.8,577.2 439.5,659.9 440.2,599.8 441.0,575.7 441.7,701.0 442.5,628.4 443.2,661.5 444.0,610.4 444.7,714.5 445.5,556.1 446.2,676.9 446.9,637.3 447.7,595.4 448.4,566.6 449.2,604.6 449.9,643.0 450.7,608.7 451.4,619.0 452.2,625.2 452.9,642.6 453.7,605.7 454.4,608.4 455.1,621.5 455.9,625.7 456.6,551.1 457.4,634.4 458.1,578.8 458.9,624.7 459.6,561.2 460.4,574.6 461.1,601.0 461.9,556.1 462.6,616.4 463.3,633.6 464.1,666.0 464.8,575.0 465.6,569.6 466.3,645.4 467.1,639.7 467.8,598.9 470.8,645.7 471.5,627.3 472.3,630.0 473.0,612.2 473.8,582.5 474.5,534.2 475.3,588.3 476.0,632.3 476.8,607.7 477.5,680.8 478.2,666.1 479.0,592.3 479.7,637.8 480.5,599.4 481.2,600.7 482.0,575.0 482.7,591.8 483.5,585.1 484.2,571.3 484.9,641.4 485.7,642.5 486.4,634.5 487.2,576.4 487.9,636.4 488.7,621.5 489.4,610.2 490.2,629.6 490.9,680.8 491.7,620.8 492.4,611.1 493.1,567.9 493.9,599.5 494.6,639.6 495.4,642.2 496.1,692.6 496.9,593.6 497.6,558.3 498.4,556.1 499.1,701.0 499.8,605.8 500.6,603.4 501.3,600.1 502.1,600.7 502.8,611.8 503.6,612.7 504.3,569.6 505.1,623.9 505.8,643.0 506.6,614.3 507.3,633.8 508.0,598.1 508.8,591.6 509.5,608.3 510.3,608.1 511.0,687.5 511.8,633.2 512.5,566.2 513.3,634.7 514.0,605.7 514.7,618.0 515.5,599.4 516.2,662.1 517.0,589.3 517.7,643.5 518.5,642.6 519.2,624.9 520.0,529.2 520.7,547.7 521.5,637.3 522.2,653.6 522.9,646.2 523.7,575.4 524.4,685.8 525.2,656.8 525.9,618.2 526.7,669.6 527.4,559.7 528.2,668.5 528.9,602.7 529.6,600.6 530.4,666.1 531.1,608.6 531.9,585.7 532.6,603.1 533.4,609.9 534.1,587.3 534.9,566.2 535.6,607.4 536.4,622.6 537.1,597.7 537.8,567.9 538.6,592.5 539.3,635.1 540.1,654.3 540.8,606.5 541.6,562.9 542.3,586.9 543.1,635.4 543.8,595.5 544.5,551.1 545.3,622.5 546.0,615.5 546.8,680.8 547.5,612.2 548.3,675.7 549.0,641.4 549.8,666.9 550.5,668.3 551.2,649.4 552.0,591.3 552.7,563.7 553.5,566.2 554.2,582.6 555.0,627.1 555.7,546.0 556.5,613.5 557.2,562.9 558.0,632.5 558.7,608.5 559.4,599.7 560.2,646.8" fill="none" stroke="#1874c4" stroke-width="0.95" stroke-linejoin="round"/><path d="M378.4 561.2h0M379.2 573.8h0M379.9 578.2h0M380.6 635.2h0M381.4 628.2h0M382.1 635.8h0M382.9 599.8h0M383.6 620.3h0M384.4 593.9h0M385.1 679.1h0M385.9 567.0h0M386.6 621.6h0M387.4 596.1h0M388.1 622.9h0M388.8 574.7h0M389.6 679.1h0M390.3 591.4h0M391.1 625.1h0M391.8 623.5h0M392.6 595.9h0M393.3 647.0h0M394.1 668.2h0M394.8 605.5h0M395.5 640.5h0M396.3 680.8h0M397.0 682.5h0M397.8 633.8h0M398.5 657.7h0M399.3 667.5h0M400.0 617.3h0M400.8 589.0h0M401.5 626.1h0M402.2 642.9h0M403.0 605.8h0M403.7 594.9h0M404.5 628.3h0M405.2 692.6h0M406.0 567.9h0M406.7 625.3h0M407.5 645.2h0M408.2 607.0h0M409.0 610.3h0M409.7 582.4h0M410.4 660.7h0M411.2 640.2h0M411.9 646.0h0M412.7 675.4h0M413.4 554.5h0M414.2 601.1h0M414.9 642.7h0M415.7 573.0h0M416.4 591.5h0M417.2 597.9h0M417.9 605.3h0M418.6 587.1h0M419.4 547.7h0M420.1 598.3h0M420.9 598.7h0M421.6 676.5h0M422.4 607.1h0M423.1 564.6h0M423.9 592.8h0M424.6 632.9h0M425.3 619.1h0M426.1 607.2h0M426.8 647.2h0M427.6 598.8h0M428.3 621.9h0M429.1 602.3h0M429.8 635.6h0M430.6 582.8h0M431.3 598.6h0M432.1 624.3h0M432.8 597.7h0M433.5 577.1h0M434.3 559.6h0M435.0 670.1h0M435.8 589.5h0M436.5 603.2h0M437.3 621.5h0M438.0 651.5h0M438.8 577.2h0M439.5 659.9h0M440.2 599.8h0M441.0 575.7h0M441.7 701.0h0M442.5 628.4h0M443.2 661.5h0M444.0 610.4h0M444.7 714.5h0M445.5 556.1h0M446.2 676.9h0M446.9 637.3h0M447.7 595.4h0M448.4 566.6h0M449.2 604.6h0M449.9 643.0h0M450.7 608.7h0M451.4 619.0h0M452.2 625.2h0M452.9 642.6h0M453.7 605.7h0M454.4 608.4h0M455.1 621.5h0M455.9 625.7h0M456.6 551.1h0M457.4 634.4h0M458.1 578.8h0M458.9 624.7h0M459.6 561.2h0M460.4 574.6h0M461.1 601.0h0M461.9 556.1h0M462.6 616.4h0M463.3 633.6h0M464.1 666.0h0M464.8 575.0h0M465.6 569.6h0M466.3 645.4h0M467.1 639.7h0M467.8 598.9h0M470.8 645.7h0M471.5 627.3h0M472.3 630.0h0M473.0 612.2h0M473.8 582.5h0M474.5 534.2h0M475.3 588.3h0M476.0 632.3h0M476.8 607.7h0M477.5 680.8h0M478.2 666.1h0M479.0 592.3h0M479.7 637.8h0M480.5 599.4h0M481.2 600.7h0M482.0 575.0h0M482.7 591.8h0M483.5 585.1h0M484.2 571.3h0M484.9 641.4h0M485.7 642.5h0M486.4 634.5h0M487.2 576.4h0M487.9 636.4h0M488.7 621.5h0M489.4 610.2h0M490.2 629.6h0M490.9 680.8h0M491.7 620.8h0M492.4 611.1h0M493.1 567.9h0M493.9 599.5h0M494.6 639.6h0M495.4 642.2h0M496.1 692.6h0M496.9 593.6h0M497.6 558.3h0M498.4 556.1h0M499.1 701.0h0M499.8 605.8h0M500.6 603.4h0M501.3 600.1h0M502.1 600.7h0M502.8 611.8h0M503.6 612.7h0M504.3 569.6h0M505.1 623.9h0M505.8 643.0h0M506.6 614.3h0M507.3 633.8h0M508.0 598.1h0M508.8 591.6h0M509.5 608.3h0M510.3 608.1h0M511.0 687.5h0M511.8 633.2h0M512.5 566.2h0M513.3 634.7h0M514.0 605.7h0M514.7 618.0h0M515.5 599.4h0M516.2 662.1h0M517.0 589.3h0M517.7 643.5h0M518.5 642.6h0M519.2 624.9h0M520.0 529.2h0M520.7 547.7h0M521.5 637.3h0M522.2 653.6h0M522.9 646.2h0M523.7 575.4h0M524.4 685.8h0M525.2 656.8h0M525.9 618.2h0M526.7 669.6h0M527.4 559.7h0M528.2 668.5h0M528.9 602.7h0M529.6 600.6h0M530.4 666.1h0M531.1 608.6h0M531.9 585.7h0M532.6 603.1h0M533.4 609.9h0M534.1 587.3h0M534.9 566.2h0M535.6 607.4h0M536.4 622.6h0M537.1 597.7h0M537.8 567.9h0M538.6 592.5h0M539.3 635.1h0M540.1 654.3h0M540.8 606.5h0M541.6 562.9h0M542.3 586.9h0M543.1 635.4h0M543.8 595.5h0M544.5 551.1h0M545.3 622.5h0M546.0 615.5h0M546.8 680.8h0M547.5 612.2h0M548.3 675.7h0M549.0 641.4h0M549.8 666.9h0M550.5 668.3h0M551.2 649.4h0M552.0 591.3h0M552.7 563.7h0M553.5 566.2h0M554.2 582.6h0M555.0 627.1h0M555.7 546.0h0M556.5 613.5h0M557.2 562.9h0M558.0 632.5h0M558.7 608.5h0M559.4 599.7h0M560.2 646.8h0" stroke="#1874c4" stroke-width="2.4" stroke-linecap="round" fill="none"/></g></svg>
<span class="t" style="left:383.33px;top:746.50px;font-size:12px;color:#ababab;transform:scale(0.9800,1.0000);transform-origin:0 11px;-webkit-text-stroke:0.5px currentColor;will-change:transform;">-100</span>
<span class="t" style="left:423.85px;top:746.50px;font-size:12px;color:#ababab;transform:scale(0.9800,1.0000);transform-origin:0 11px;-webkit-text-stroke:0.5px currentColor;will-change:transform;">-50</span>
<span class="t" style="left:466.33px;top:746.50px;font-size:12px;color:#ababab;transform:scale(0.9800,1.0000);transform-origin:0 11px;-webkit-text-stroke:0.5px currentColor;will-change:transform;">0</span>
<span class="t" style="left:500.31px;top:746.50px;font-size:12px;color:#ababab;transform:scale(0.9800,1.0000);transform-origin:0 11px;-webkit-text-stroke:0.5px currentColor;will-change:transform;">50</span>
<span class="t" style="left:534.29px;top:746.50px;font-size:12px;color:#ababab;transform:scale(0.9800,1.0000);transform-origin:0 11px;-webkit-text-stroke:0.5px currentColor;will-change:transform;">100</span>
<span class="t" style="left:359.04px;top:500.90px;font-size:12px;color:#ababab;transform:scale(0.9800,1.0000);transform-origin:0 11px;-webkit-text-stroke:0.5px currentColor;will-change:transform;">-2</span>
<span class="t" style="left:359.04px;top:534.59px;font-size:12px;color:#ababab;transform:scale(0.9800,1.0000);transform-origin:0 11px;-webkit-text-stroke:0.5px currentColor;will-change:transform;">-4</span>
<span class="t" style="left:359.04px;top:568.27px;font-size:12px;color:#ababab;transform:scale(0.9800,1.0000);transform-origin:0 11px;-webkit-text-stroke:0.5px currentColor;will-change:transform;">-6</span>
<span class="t" style="left:359.04px;top:601.96px;font-size:12px;color:#ababab;transform:scale(0.9800,1.0000);transform-origin:0 11px;-webkit-text-stroke:0.5px currentColor;will-change:transform;">-8</span>
<span class="t" style="left:352.50px;top:635.64px;font-size:12px;color:#ababab;transform:scale(0.9800,1.0000);transform-origin:0 11px;-webkit-text-stroke:0.5px currentColor;will-change:transform;">-10</span>
<span class="t" style="left:352.50px;top:669.33px;font-size:12px;color:#ababab;transform:scale(0.9800,1.0000);transform-origin:0 11px;-webkit-text-stroke:0.5px currentColor;will-change:transform;">-12</span>
<span class="t" style="left:352.50px;top:703.01px;font-size:12px;color:#ababab;transform:scale(0.9800,1.0000);transform-origin:0 11px;-webkit-text-stroke:0.5px currentColor;will-change:transform;">-14</span>
<span class="t" style="left:352.50px;top:736.10px;font-size:12px;color:#ababab;transform:scale(0.9800,1.0000);transform-origin:0 11px;-webkit-text-stroke:0.5px currentColor;will-change:transform;">-16</span>
<span class="t" style="left:430.30px;top:760.00px;font-size:12px;color:#ababab;transform:scale(0.8859,1.0000);transform-origin:0 11px;-webkit-text-stroke:0.5px currentColor;will-change:transform;">Subcarrier Index</span>
<span class="t" style="left:319.00px;top:619.00px;font-size:12px;color:#ababab;transform:rotate(-90deg) scale(0.8653,1);transform-origin:50% 50%;will-change:transform;">EVM (dB)</span>
<div style="position:absolute;left:545px;top:486px;width:20px;height:20px;background:#f5f5f5;border-radius:5px"><svg width="20" height="20" viewBox="0 0 20 20" style="display:block"><circle cx="3.6" cy="9.6" r="1.4" fill="#6a6a6a"/><circle cx="9.7" cy="9.6" r="1.4" fill="#6a6a6a"/><circle cx="15.8" cy="9.6" r="1.4" fill="#6a6a6a"/></svg></div>
<div style="position:absolute;left:589px;top:462px;width:250px;height:1px;background:#c8c8c8"></div>
<div style="position:absolute;left:589px;top:463px;width:250px;height:23px;background:#fff;border-bottom:1px solid #c8c8c8;box-sizing:border-box"></div>
<div style="position:absolute;left:589px;top:463px;width:16px;height:22px;border-right:1px solid #c8c8c8;box-sizing:border-box"></div>
<svg class="a" style="left:595px;top:470px" width="4" height="7" viewBox="0 0 4 7"><rect x="0" y="0" width="4" height="1" fill="#8a8a8a"/><rect x="0" y="2" width="4" height="1" fill="#8a8a8a"/><rect x="0" y="4" width="4" height="1" fill="#8a8a8a"/><rect x="0" y="6" width="4" height="1" fill="#8a8a8a"/></svg>
<div style="position:absolute;left:604px;top:463px;width:98px;height:23px;background:#fff;border-left:1px solid #bdbdbd;border-right:1px solid #bdbdbd;border-top:3px solid #9e9e9e;box-sizing:border-box"></div>
<span class="t" style="left:613.00px;top:469.00px;font-size:12px;color:#555;">Symbol EVM</span>
<svg class="a" style="left:817.0px;top:469.0px" width="2" height="10" viewBox="0 0 2 10"><rect x="0" y="0" width="2" height="2" fill="#606060"/><rect x="0" y="4" width="2" height="2" fill="#606060"/><rect x="0" y="8" width="2" height="2" fill="#606060"/></svg>
<div style="position:absolute;left:838px;top:463px;width:1px;height:23px;background:#c4c4c4"></div>
<svg class="a" style="left:589px;top:486px" width="249" height="289" viewBox="589 486 249 289"><rect x="589" y="486" width="249" height="289" fill="#2c2c2c"/><rect x="629" y="507" width="185" height="236" fill="#000"/><path d="M675.5 507V743M722.5 507V743M768.5 507V743M629 537.5H814M629 566.5H814M629 596.5H814M629 625.5H814M629 655.5H814M629 684.5H814M629 714.5H814" stroke="#262626" stroke-width="1" fill="none"/><rect x="629.5" y="507.5" width="185" height="236" fill="none" stroke="#bdbdbd" stroke-width="1"/><path d="M675.5 743v-3M675.5 507v3M722.5 743v-3M722.5 507v3M768.5 743v-3M768.5 507v3M629 537.5h3M814 537.5h-3M629 566.5h3M814 566.5h-3M629 596.5h3M814 596.5h-3M629 625.5h3M814 625.5h-3M629 655.5h3M814 655.5h-3M629 684.5h3M814 684.5h-3M629 714.5h3M814 714.5h-3" stroke="#bdbdbd" stroke-width="1" fill="none"/><clipPath id="c589"><rect x="629" y="507" width="186" height="237"/></clipPath><g clip-path="url(#c589)"><polyline points="652.6,513.7 675.8,735.2 698.9,680.1 722.1,609.6 745.3,743.2 768.4,695.7 791.6,692.2 814.8,571.6" fill="none" stroke="#1874c4" stroke-width="1"/><path d="M652.6 513.7h0M675.8 735.2h0M698.9 680.1h0M722.1 609.6h0M745.3 743.2h0M768.4 695.7h0M791.6 692.2h0M814.8 571.6h0" stroke="#1874c4" stroke-width="2.4" stroke-linecap="round" fill="none"/></g></svg>
<span class="t" style="left:626.36px;top:746.50px;font-size:12px;color:#ababab;-webkit-text-stroke:0.5px currentColor;will-change:transform;">0</span>
<span class="t" style="left:672.71px;top:746.50px;font-size:12px;color:#ababab;-webkit-text-stroke:0.5px currentColor;will-change:transform;">2</span>
<span class="t" style="left:719.06px;top:746.50px;font-size:12px;color:#ababab;-webkit-text-stroke:0.5px currentColor;will-change:transform;">4</span>
<span class="t" style="left:765.41px;top:746.50px;font-size:12px;color:#ababab;-webkit-text-stroke:0.5px currentColor;will-change:transform;">6</span>
<span class="t" style="left:811.76px;top:746.50px;font-size:12px;color:#ababab;-webkit-text-stroke:0.5px currentColor;will-change:transform;">8</span>
<span class="t" style="left:604.74px;top:500.90px;font-size:12px;color:#ababab;transform:scale(0.9800,1.0000);transform-origin:0 11px;-webkit-text-stroke:0.5px currentColor;will-change:transform;">-7.5</span>
<span class="t" style="left:604.74px;top:530.39px;font-size:12px;color:#ababab;transform:scale(0.9800,1.0000);transform-origin:0 11px;-webkit-text-stroke:0.5px currentColor;will-change:transform;">-7.6</span>
<span class="t" style="left:604.74px;top:559.88px;font-size:12px;color:#ababab;transform:scale(0.9800,1.0000);transform-origin:0 11px;-webkit-text-stroke:0.5px currentColor;will-change:transform;">-7.7</span>
<span class="t" style="left:604.74px;top:589.36px;font-size:12px;color:#ababab;transform:scale(0.9800,1.0000);transform-origin:0 11px;-webkit-text-stroke:0.5px currentColor;will-change:transform;">-7.8</span>
<span class="t" style="left:604.74px;top:618.85px;font-size:12px;color:#ababab;transform:scale(0.9800,1.0000);transform-origin:0 11px;-webkit-text-stroke:0.5px currentColor;will-change:transform;">-7.9</span>
<span class="t" style="left:614.54px;top:648.34px;font-size:12px;color:#ababab;transform:scale(0.9800,1.0000);transform-origin:0 11px;-webkit-text-stroke:0.5px currentColor;will-change:transform;">-8</span>
<span class="t" style="left:604.74px;top:677.82px;font-size:12px;color:#ababab;transform:scale(0.9800,1.0000);transform-origin:0 11px;-webkit-text-stroke:0.5px currentColor;will-change:transform;">-8.1</span>
<span class="t" style="left:604.74px;top:707.31px;font-size:12px;color:#ababab;transform:scale(0.9800,1.0000);transform-origin:0 11px;-webkit-text-stroke:0.5px currentColor;will-change:transform;">-8.2</span>
<span class="t" style="left:604.74px;top:736.20px;font-size:12px;color:#ababab;transform:scale(0.9800,1.0000);transform-origin:0 11px;-webkit-text-stroke:0.5px currentColor;will-change:transform;">-8.3</span>
<span class="t" style="left:684.10px;top:760.00px;font-size:12px;color:#ababab;transform:scale(0.8858,1.0000);transform-origin:0 11px;-webkit-text-stroke:0.5px currentColor;will-change:transform;">Symbol Number</span>
<span class="t" style="left:569.50px;top:619.00px;font-size:12px;color:#ababab;transform:rotate(-90deg) scale(0.8653,1);transform-origin:50% 50%;will-change:transform;">EVM (dB)</span>
<div style="position:absolute;left:796px;top:486px;width:20px;height:20px;background:#f5f5f5;border-radius:5px"><svg width="20" height="20" viewBox="0 0 20 20" style="display:block"><circle cx="3.6" cy="9.6" r="1.4" fill="#6a6a6a"/><circle cx="9.7" cy="9.6" r="1.4" fill="#6a6a6a"/><circle cx="15.8" cy="9.6" r="1.4" fill="#6a6a6a"/></svg></div>
<div style="position:absolute;left:840px;top:462px;width:250px;height:1px;background:#c8c8c8"></div>
<div style="position:absolute;left:840px;top:463px;width:250px;height:23px;background:#fff;border-bottom:1px solid #c8c8c8;box-sizing:border-box"></div>
<div style="position:absolute;left:840px;top:463px;width:16px;height:22px;border-right:1px solid #c8c8c8;box-sizing:border-box"></div>
<svg class="a" style="left:846px;top:470px" width="4" height="7" viewBox="0 0 4 7"><rect x="0" y="0" width="4" height="1" fill="#8a8a8a"/><rect x="0" y="2" width="4" height="1" fill="#8a8a8a"/><rect x="0" y="4" width="4" height="1" fill="#8a8a8a"/><rect x="0" y="6" width="4" height="1" fill="#8a8a8a"/></svg>
<div style="position:absolute;left:855px;top:463px;width:122px;height:23px;background:#fff;border-left:1px solid #bdbdbd;border-right:1px solid #bdbdbd;border-top:3px solid #9e9e9e;box-sizing:border-box"></div>
<span class="t" style="left:864.00px;top:469.00px;font-size:12px;color:#555;">Spectral Flatness</span>
<svg class="a" style="left:1068.0px;top:469.0px" width="2" height="10" viewBox="0 0 2 10"><rect x="0" y="0" width="2" height="2" fill="#606060"/><rect x="0" y="4" width="2" height="2" fill="#606060"/><rect x="0" y="8" width="2" height="2" fill="#606060"/></svg>
<div style="position:absolute;left:1089px;top:463px;width:1px;height:23px;background:#c4c4c4"></div>
<svg class="a" style="left:840px;top:486px" width="249" height="289" viewBox="840 486 249 289"><rect x="840" y="486" width="249" height="289" fill="#2c2c2c"/><rect x="873" y="507" width="192" height="236" fill="#000"/><path d="M890.5 507V743M930.5 507V743M969.5 507V743M1009.5 507V743M1048.5 507V743M873 518.5H1065M873 560.5H1065M873 601.5H1065M873 643.5H1065M873 685.5H1065M873 726.5H1065" stroke="#262626" stroke-width="1" fill="none"/><rect x="873.5" y="507.5" width="192" height="236" fill="none" stroke="#bdbdbd" stroke-width="1"/><path d="M890.5 743v-3M890.5 507v3M930.5 743v-3M930.5 507v3M969.5 743v-3M969.5 507v3M1009.5 743v-3M1009.5 507v3M1048.5 743v-3M1048.5 507v3M873 518.5h3M1065 518.5h-3M873 560.5h3M1065 560.5h-3M873 601.5h3M1065 601.5h-3M873 643.5h3M1065 643.5h-3M873 685.5h3M1065 685.5h-3M873 726.5h3M1065 726.5h-3" stroke="#bdbdbd" stroke-width="1" fill="none"/><clipPath id="c840"><rect x="873" y="507" width="193" height="237"/></clipPath><g clip-path="url(#c840)"><path d="M873 518.0H1066" stroke="#e4e41c" stroke-width="1.4" fill="none"/><path d="M873 726.3H902.6L903.4 684.6H968.2M971.4 684.6H1036.2L1037.0 726.3H1066" stroke="#e4e41c" stroke-width="1.4" fill="none"/><path d="M872.1 622.6h2.6M872.8 640.6h2.6M873.6 660.8h2.6M874.4 637.3h2.6M875.2 556.0h2.6M876.0 591.3h2.6M876.8 683.6h2.6M877.6 622.0h2.6M878.4 569.3h2.6M879.2 538.9h2.6M880.0 585.7h2.6M880.8 663.3h2.6M881.5 628.0h2.6M882.3 540.1h2.6M883.1 588.1h2.6M883.9 654.6h2.6M884.7 722.1h2.6M885.5 635.0h2.6M886.3 616.7h2.6M887.1 611.8h2.6M887.9 619.6h2.6M888.7 576.0h2.6M889.5 597.2h2.6M890.2 615.3h2.6M891.0 581.0h2.6M891.8 643.1h2.6M892.6 651.5h2.6M893.4 603.9h2.6M894.2 628.8h2.6M895.0 601.0h2.6M895.8 639.4h2.6M896.6 594.3h2.6M897.4 596.4h2.6M898.1 605.5h2.6M898.9 631.1h2.6M899.7 608.7h2.6M900.5 632.6h2.6M901.3 641.6h2.6M902.1 678.9h2.6M902.9 633.2h2.6M903.7 554.8h2.6M904.5 570.4h2.6M905.3 663.7h2.6M906.1 666.3h2.6M906.8 632.9h2.6M907.6 593.9h2.6M908.4 593.6h2.6M909.2 663.4h2.6M910.0 603.1h2.6M910.8 603.8h2.6M911.6 675.6h2.6M912.4 635.7h2.6M913.2 569.7h2.6M914.0 632.8h2.6M914.7 606.4h2.6M915.5 623.9h2.6M916.3 545.3h2.6M917.1 575.5h2.6M917.9 663.2h2.6M918.7 663.1h2.6M919.5 671.0h2.6M920.3 566.2h2.6M921.1 615.9h2.6M921.9 597.5h2.6M922.7 548.6h2.6M923.4 662.5h2.6M924.2 649.9h2.6M925.0 654.9h2.6M925.8 574.1h2.6M926.6 607.6h2.6M927.4 670.9h2.6M928.2 586.7h2.6M929.0 591.5h2.6M929.8 624.8h2.6M930.6 564.3h2.6M931.3 639.7h2.6M932.1 636.3h2.6M932.9 639.1h2.6M933.7 561.8h2.6M934.5 607.4h2.6M935.3 628.4h2.6M936.1 634.1h2.6M936.9 580.6h2.6M937.7 631.3h2.6M938.5 648.5h2.6M939.3 573.9h2.6M940.0 636.2h2.6M940.8 606.1h2.6M941.6 595.3h2.6M942.4 610.4h2.6M943.2 596.9h2.6M944.0 549.0h2.6M944.8 648.6h2.6M945.6 638.3h2.6M946.4 658.2h2.6M947.2 602.1h2.6M947.9 607.2h2.6M948.7 585.9h2.6M949.5 611.0h2.6M950.3 611.5h2.6M951.1 619.8h2.6M951.9 612.9h2.6M952.7 589.5h2.6M953.5 608.1h2.6M954.3 591.6h2.6M955.1 744.0h2.6M955.9 662.3h2.6M956.6 649.2h2.6M957.4 535.5h2.6M958.2 583.1h2.6M959.0 627.4h2.6M959.8 660.5h2.6M960.6 594.4h2.6M961.4 616.2h2.6M962.2 616.8h2.6M963.0 629.2h2.6M963.8 674.2h2.6M964.5 558.3h2.6M965.3 606.2h2.6M966.1 642.5h2.6M966.9 534.6h2.6M970.1 636.8h2.6M970.9 665.5h2.6M971.7 605.6h2.6M972.5 631.5h2.6M973.2 630.3h2.6M974.0 681.5h2.6M974.8 668.5h2.6M975.6 613.3h2.6M976.4 593.2h2.6M977.2 570.2h2.6M978.0 584.9h2.6M978.8 565.2h2.6M979.6 579.2h2.6M980.4 578.3h2.6M981.1 534.6h2.6M981.9 573.6h2.6M982.7 590.6h2.6M983.5 638.0h2.6M984.3 626.6h2.6M985.1 606.7h2.6M985.9 567.8h2.6M986.7 573.4h2.6M987.5 667.9h2.6M988.3 594.7h2.6M989.1 679.4h2.6M989.8 534.6h2.6M990.6 557.5h2.6M991.4 631.4h2.6M992.2 547.8h2.6M993.0 593.9h2.6M993.8 657.4h2.6M994.6 609.5h2.6M995.4 612.5h2.6M996.2 540.4h2.6M997.0 673.1h2.6M997.7 603.8h2.6M998.5 604.6h2.6M999.3 608.1h2.6M1000.1 626.5h2.6M1000.9 736.7h2.6M1001.7 558.0h2.6M1002.5 729.4h2.6M1003.3 626.9h2.6M1004.1 657.8h2.6M1004.9 591.0h2.6M1005.7 619.3h2.6M1006.4 616.7h2.6M1007.2 652.8h2.6M1008.0 534.6h2.6M1008.8 563.5h2.6M1009.6 628.5h2.6M1010.4 563.8h2.6M1011.2 548.9h2.6M1012.0 653.1h2.6M1012.8 613.9h2.6M1013.6 608.4h2.6M1014.3 572.8h2.6M1015.1 599.2h2.6M1015.9 603.0h2.6M1016.7 597.1h2.6M1017.5 534.6h2.6M1018.3 663.4h2.6M1019.1 649.8h2.6M1019.9 626.9h2.6M1020.7 534.6h2.6M1021.5 628.7h2.6M1022.3 681.5h2.6M1023.0 593.8h2.6M1023.8 578.4h2.6M1024.6 559.7h2.6M1025.4 681.4h2.6M1026.2 625.0h2.6M1027.0 577.6h2.6M1027.8 638.1h2.6M1028.6 534.6h2.6M1029.4 595.6h2.6M1030.2 641.0h2.6M1030.9 631.0h2.6M1031.7 545.2h2.6M1032.5 613.6h2.6M1033.3 667.4h2.6M1034.1 615.0h2.6M1034.9 595.1h2.6M1035.7 554.2h2.6M1036.5 629.9h2.6M1037.3 572.1h2.6M1038.1 567.7h2.6M1038.9 660.4h2.6M1039.6 601.5h2.6M1040.4 534.6h2.6M1041.2 535.9h2.6M1042.0 693.0h2.6M1042.8 583.6h2.6M1043.6 555.9h2.6M1044.4 661.0h2.6M1045.2 598.3h2.6M1046.0 712.7h2.6M1046.8 594.9h2.6M1047.5 597.9h2.6M1048.3 534.6h2.6M1049.1 708.6h2.6M1049.9 551.4h2.6M1050.7 549.7h2.6M1051.5 669.3h2.6M1052.3 554.9h2.6M1053.1 669.9h2.6M1053.9 643.5h2.6M1054.7 660.8h2.6M1055.5 678.0h2.6M1056.2 634.9h2.6M1057.0 558.8h2.6M1057.8 665.8h2.6M1058.6 632.8h2.6M1059.4 607.9h2.6M1060.2 613.7h2.6M1061.0 570.2h2.6M1061.8 659.3h2.6M1062.6 604.7h2.6M1063.4 617.9h2.6M1064.2 596.9h2.6M1064.9 549.5h2.6" stroke="#1874c4" stroke-width="2.6" fill="none"/></g><rect x="938.5" y="518.5" width="119" height="28" fill="#111" stroke="#d0d0d0" stroke-width="1"/><rect x="960" y="525" width="2.6" height="2.6" fill="#1874c4"/><path d="M941.5 538.5H981.5" stroke="#e4e41c" stroke-width="1.2"/></svg>
<span class="t" style="left:879.28px;top:746.50px;font-size:12px;color:#ababab;transform:scale(0.9800,1.0000);transform-origin:0 11px;-webkit-text-stroke:0.5px currentColor;will-change:transform;">-100</span>
<span class="t" style="left:922.08px;top:746.50px;font-size:12px;color:#ababab;transform:scale(0.9800,1.0000);transform-origin:0 11px;-webkit-text-stroke:0.5px currentColor;will-change:transform;">-50</span>
<span class="t" style="left:966.83px;top:746.50px;font-size:12px;color:#ababab;transform:scale(0.9800,1.0000);transform-origin:0 11px;-webkit-text-stroke:0.5px currentColor;will-change:transform;">0</span>
<span class="t" style="left:1003.08px;top:746.50px;font-size:12px;color:#ababab;transform:scale(0.9800,1.0000);transform-origin:0 11px;-webkit-text-stroke:0.5px currentColor;will-change:transform;">50</span>
<span class="t" style="left:1039.34px;top:746.50px;font-size:12px;color:#ababab;transform:scale(0.9800,1.0000);transform-origin:0 11px;-webkit-text-stroke:0.5px currentColor;will-change:transform;">100</span>
<span class="t" style="left:862.33px;top:511.58px;font-size:12px;color:#ababab;-webkit-text-stroke:0.5px currentColor;will-change:transform;">4</span>
<span class="t" style="left:862.33px;top:553.24px;font-size:12px;color:#ababab;-webkit-text-stroke:0.5px currentColor;will-change:transform;">2</span>
<span class="t" style="left:862.33px;top:594.90px;font-size:12px;color:#ababab;-webkit-text-stroke:0.5px currentColor;will-change:transform;">0</span>
<span class="t" style="left:858.33px;top:636.56px;font-size:12px;color:#ababab;-webkit-text-stroke:0.5px currentColor;will-change:transform;">-2</span>
<span class="t" style="left:858.33px;top:678.22px;font-size:12px;color:#ababab;-webkit-text-stroke:0.5px currentColor;will-change:transform;">-4</span>
<span class="t" style="left:858.33px;top:719.88px;font-size:12px;color:#ababab;-webkit-text-stroke:0.5px currentColor;will-change:transform;">-6</span>
<span class="t" style="left:931.20px;top:760.00px;font-size:12px;color:#ababab;transform:scale(0.8859,1.0000);transform-origin:0 11px;-webkit-text-stroke:0.5px currentColor;will-change:transform;">Subcarrier Index</span>
<span class="t" style="left:812.28px;top:619.50px;font-size:12px;color:#ababab;transform:rotate(-90deg) scale(0.9009,1);transform-origin:50% 50%;will-change:transform;">Deviation (dB)</span>
<span class="t" style="left:985.20px;top:520.00px;font-size:10.5px;color:#d6d6d6;font-weight:bold;transform:scale(0.9555,1.0000);transform-origin:0 11px;will-change:transform;">Antenna 1</span>
<span class="t" style="left:985.20px;top:532.00px;font-size:10.5px;color:#d6d6d6;font-weight:bold;transform:scale(0.9392,1.0000);transform-origin:0 11px;will-change:transform;">Deviation limit</span>
<div style="position:absolute;left:1047px;top:486px;width:20px;height:20px;background:#f5f5f5;border-radius:5px"><svg width="20" height="20" viewBox="0 0 20 20" style="display:block"><circle cx="3.6" cy="9.6" r="1.4" fill="#6a6a6a"/><circle cx="9.7" cy="9.6" r="1.4" fill="#6a6a6a"/><circle cx="15.8" cy="9.6" r="1.4" fill="#6a6a6a"/></svg></div>
<div style="position:absolute;left:1091px;top:462px;width:254px;height:1px;background:#c8c8c8"></div>
<div style="position:absolute;left:1091px;top:463px;width:254px;height:23px;background:#fff;border-bottom:1px solid #c8c8c8;box-sizing:border-box"></div>
<div style="position:absolute;left:1091px;top:463px;width:16px;height:22px;border-right:1px solid #c8c8c8;box-sizing:border-box"></div>
<svg class="a" style="left:1097px;top:470px" width="4" height="7" viewBox="0 0 4 7"><rect x="0" y="0" width="4" height="1" fill="#8a8a8a"/><rect x="0" y="2" width="4" height="1" fill="#8a8a8a"/><rect x="0" y="4" width="4" height="1" fill="#8a8a8a"/><rect x="0" y="6" width="4" height="1" fill="#8a8a8a"/></svg>
<div style="position:absolute;left:1106px;top:463px;width:147px;height:23px;background:#fff;border-left:1px solid #bdbdbd;border-right:1px solid #bdbdbd;border-top:3px solid #2a8ae0;box-sizing:border-box"></div>
<span class="t" style="left:1115.00px;top:469.00px;font-size:12px;color:#1f1f1f;">Constellation Diagram</span>
<svg class="a" style="left:1323.0px;top:469.0px" width="2" height="10" viewBox="0 0 2 10"><rect x="0" y="0" width="2" height="2" fill="#606060"/><rect x="0" y="4" width="2" height="2" fill="#606060"/><rect x="0" y="8" width="2" height="2" fill="#606060"/></svg>
<div style="position:absolute;left:1344px;top:463px;width:1px;height:23px;background:#c4c4c4"></div>
<svg class="a" style="left:1091px;top:486px" width="253" height="289" viewBox="1091 486 253 289"><rect x="1091" y="486" width="253" height="289" fill="#222"/><rect x="1133" y="496" width="191" height="236" fill="#131313"/><path d="M1148.5 496V732M1229.5 496V732M1309.5 496V732M1133 534.5H1324M1133 574.5H1324M1133 614.5H1324M1133 654.5H1324M1133 694.5H1324" stroke="#4e4e4e" stroke-width="1" fill="none"/><path d="M1182.2 622.0h0M1187.5 622.4h0M1259.1 617.0h0M1263.7 642.7h0M1265.1 605.6h0M1279.2 617.8h0M1258.4 601.9h0M1241.7 621.3h0M1274.6 608.3h0M1254.4 604.3h0M1193.0 629.4h0M1186.5 594.2h0M1265.8 622.6h0M1264.3 628.6h0M1195.0 608.8h0M1267.2 604.6h0M1186.6 607.6h0M1208.4 611.7h0M1201.7 612.1h0M1265.4 613.9h0M1252.0 614.7h0M1192.5 619.2h0M1189.5 629.8h0M1262.8 629.4h0M1272.3 622.5h0M1250.6 602.5h0M1245.0 602.5h0M1180.9 613.1h0M1173.2 610.4h0M1203.4 604.1h0M1263.2 609.8h0M1258.6 620.7h0M1278.3 624.1h0M1187.3 625.9h0M1177.8 627.0h0M1210.5 603.8h0M1268.2 632.0h0M1268.5 623.6h0M1245.5 614.6h0M1236.4 588.9h0M1179.5 596.6h0M1264.3 629.5h0M1189.3 638.8h0M1186.4 610.1h0M1197.1 602.4h0M1186.6 636.4h0M1180.0 609.4h0M1182.0 610.2h0M1276.1 621.0h0M1195.6 604.1h0M1264.3 622.2h0M1195.4 623.2h0M1274.3 628.6h0M1210.4 610.1h0M1268.6 625.2h0M1251.9 605.3h0M1187.5 622.8h0M1201.3 624.0h0M1276.3 624.2h0M1204.3 604.3h0M1190.8 621.2h0M1266.6 617.1h0M1195.8 605.1h0M1179.6 602.9h0M1251.5 614.3h0M1196.7 620.9h0M1197.5 600.5h0M1253.3 640.4h0M1193.3 636.9h0M1252.0 604.3h0M1184.5 603.4h0M1193.5 617.9h0M1200.9 610.6h0M1185.4 608.4h0M1189.3 624.3h0M1274.2 617.9h0M1194.8 638.3h0M1205.9 611.1h0M1192.5 642.8h0M1273.5 608.8h0M1195.4 611.2h0M1193.2 619.5h0M1185.1 610.8h0M1185.7 593.3h0M1272.2 604.5h0M1258.0 627.5h0M1195.5 612.5h0M1186.3 598.9h0M1269.3 613.7h0M1245.1 617.5h0M1259.6 606.7h0M1257.7 610.0h0M1201.4 611.9h0M1198.4 614.3h0M1261.6 612.5h0M1272.6 612.6h0M1191.0 626.5h0M1196.0 594.9h0M1258.6 611.0h0M1262.7 602.6h0M1259.9 600.6h0M1261.2 609.1h0M1195.1 619.4h0M1278.9 602.0h0M1258.9 619.9h0M1186.9 616.9h0M1185.9 635.8h0M1256.0 645.9h0M1273.2 622.8h0M1182.6 629.0h0M1280.2 625.2h0M1187.6 605.8h0M1195.3 621.2h0M1193.4 620.1h0M1182.5 599.5h0M1191.6 620.4h0M1189.7 626.6h0M1258.1 603.8h0M1269.7 625.7h0M1261.7 609.7h0M1186.5 618.1h0M1190.3 619.0h0M1202.3 617.5h0M1248.3 617.4h0M1265.6 639.2h0M1187.5 611.3h0M1202.0 616.1h0M1207.4 616.8h0M1176.8 622.2h0M1246.0 617.0h0M1193.5 618.6h0M1264.7 622.4h0M1254.9 601.8h0M1270.2 616.2h0M1263.1 603.3h0M1282.8 608.1h0M1256.2 606.5h0M1277.7 604.6h0M1263.7 613.9h0M1206.4 608.6h0M1196.0 623.8h0M1187.3 627.2h0M1261.9 591.1h0M1264.4 599.7h0M1259.0 608.6h0M1203.2 614.2h0M1263.1 589.2h0M1209.0 615.2h0M1202.8 629.8h0M1198.6 617.0h0M1261.2 610.6h0M1244.1 610.8h0M1213.5 623.5h0M1265.6 622.7h0M1195.9 617.4h0M1196.3 609.9h0M1271.1 602.8h0M1193.3 602.8h0M1188.7 638.3h0M1267.3 618.8h0M1203.8 602.4h0M1255.3 613.3h0M1180.8 632.0h0M1189.8 625.7h0M1218.8 615.7h0M1256.4 599.3h0M1197.2 615.8h0M1273.1 608.3h0M1264.8 619.1h0M1204.1 622.5h0M1201.1 631.8h0M1264.3 614.7h0M1281.9 614.1h0M1180.9 611.3h0M1183.2 612.9h0M1278.8 612.8h0M1248.5 609.9h0M1202.2 614.5h0M1188.7 614.3h0M1268.2 607.6h0M1209.5 617.1h0M1257.5 607.9h0M1189.4 608.4h0M1267.1 626.3h0M1184.5 597.1h0M1193.8 608.3h0M1205.9 625.1h0M1262.0 623.3h0M1259.2 610.2h0M1270.0 611.1h0M1195.0 640.1h0M1193.1 619.2h0M1244.4 614.7h0M1252.7 601.5h0M1263.5 612.1h0M1263.0 641.5h0M1263.4 621.5h0M1207.8 620.9h0M1255.2 618.9h0M1192.0 617.5h0M1182.9 611.4h0M1195.5 633.0h0M1254.7 618.4h0M1189.6 612.6h0M1192.9 605.1h0M1273.6 631.9h0M1257.6 627.2h0M1190.0 585.7h0M1195.9 605.8h0M1258.3 616.9h0M1189.7 604.8h0M1266.4 603.4h0M1218.7 621.7h0M1266.4 618.7h0M1255.3 625.1h0M1195.4 623.3h0M1272.6 608.7h0M1192.7 629.7h0M1247.9 598.1h0M1252.1 620.6h0M1203.5 623.7h0M1189.8 597.4h0M1264.8 603.1h0M1183.3 602.4h0M1193.8 624.8h0M1184.2 624.5h0M1251.3 593.1h0M1206.6 605.0h0M1279.5 627.2h0M1264.7 605.5h0M1201.4 631.3h0M1259.0 609.5h0M1260.7 620.4h0M1268.9 616.1h0M1219.1 608.3h0M1186.7 622.8h0M1190.7 627.3h0M1188.5 607.6h0M1272.9 614.3h0M1257.5 617.7h0M1260.2 615.2h0M1267.3 605.5h0M1210.2 620.7h0M1202.6 611.2h0M1185.2 612.0h0M1206.2 607.2h0M1270.9 608.5h0M1198.7 615.1h0M1273.5 621.4h0M1199.6 632.2h0M1267.3 629.1h0M1216.1 603.6h0M1279.2 618.5h0M1244.4 633.3h0M1258.6 618.0h0M1259.7 626.0h0M1270.4 626.5h0M1201.1 631.5h0M1259.6 604.7h0M1204.6 614.6h0M1258.2 605.6h0M1200.1 611.3h0M1254.4 618.8h0M1257.4 594.1h0M1253.8 619.9h0M1263.4 615.5h0M1275.8 635.8h0M1262.5 638.4h0M1252.0 644.3h0M1250.6 614.6h0M1205.6 610.1h0M1183.8 611.5h0M1198.4 606.7h0M1188.9 625.7h0M1178.1 611.9h0M1186.1 587.4h0M1266.5 609.7h0M1202.9 625.7h0M1214.3 618.1h0M1194.5 625.9h0M1215.7 601.3h0M1249.3 606.3h0M1199.5 616.9h0M1245.4 617.2h0M1190.8 612.4h0M1260.8 608.6h0M1260.8 619.1h0M1262.0 615.2h0M1192.4 643.4h0M1198.5 621.3h0M1260.1 606.1h0M1196.7 610.3h0M1204.5 603.8h0M1201.7 617.7h0M1264.0 634.8h0M1195.0 611.1h0M1272.3 613.7h0M1279.6 628.6h0M1252.8 628.6h0M1266.1 616.0h0M1175.2 610.8h0M1263.6 610.6h0M1270.8 611.5h0M1193.1 606.7h0M1193.9 628.6h0M1192.8 608.5h0M1206.8 609.1h0M1198.1 622.4h0M1187.0 608.7h0M1199.8 621.0h0M1184.8 614.8h0M1174.5 615.9h0M1262.1 622.1h0M1273.5 625.0h0M1259.5 640.5h0M1200.8 625.0h0M1253.9 598.8h0M1289.1 591.9h0M1268.1 601.5h0M1265.4 617.6h0M1281.3 617.7h0M1267.4 620.4h0M1208.0 601.8h0M1271.8 619.6h0M1172.4 621.1h0M1270.5 600.0h0M1266.0 623.9h0M1267.3 609.6h0M1252.7 608.4h0M1192.7 617.2h0M1268.0 601.6h0M1193.6 612.5h0M1279.0 607.8h0M1192.6 622.0h0M1246.6 612.5h0M1190.5 623.4h0M1193.8 613.4h0M1206.0 628.6h0M1210.2 627.4h0M1184.9 628.2h0M1266.9 596.8h0M1186.5 615.2h0M1270.7 613.4h0M1192.4 634.3h0M1278.0 621.0h0M1257.9 605.3h0M1189.1 634.4h0M1204.3 601.7h0M1179.6 613.8h0M1203.3 595.1h0M1255.1 605.9h0M1208.3 615.4h0M1180.8 605.5h0M1199.4 617.4h0M1190.5 626.5h0M1259.0 624.3h0M1189.9 620.7h0M1190.5 634.3h0M1283.8 638.9h0M1266.0 602.1h0M1188.5 614.4h0M1266.9 625.2h0M1266.7 607.1h0M1190.3 617.0h0M1256.4 634.9h0M1276.1 606.0h0M1259.1 617.7h0M1271.0 632.5h0M1193.3 608.2h0M1194.3 614.9h0M1200.9 605.3h0M1186.8 632.7h0M1207.7 602.7h0M1213.1 601.2h0M1257.2 617.1h0M1271.2 629.6h0M1260.8 621.0h0M1196.4 608.1h0M1190.9 634.7h0M1187.3 611.3h0M1182.3 605.3h0M1272.2 626.2h0M1199.8 604.2h0M1207.0 626.8h0M1176.2 618.6h0M1257.0 608.9h0M1250.7 641.1h0M1270.8 609.9h0M1203.9 610.2h0M1195.3 596.5h0M1197.4 610.3h0M1208.0 621.4h0M1205.6 616.0h0M1259.9 612.5h0M1273.7 614.6h0M1200.1 633.7h0M1255.8 615.1h0M1203.5 607.8h0M1175.7 617.3h0M1263.6 621.9h0M1260.5 637.4h0M1247.9 613.8h0M1260.3 617.3h0M1252.2 617.1h0M1208.7 611.0h0M1255.7 629.7h0M1267.1 613.2h0M1193.8 621.8h0M1205.5 604.5h0M1190.7 624.6h0M1196.1 607.7h0M1268.0 608.6h0M1262.3 626.0h0M1265.3 615.0h0M1194.5 630.7h0M1212.1 606.2h0M1261.7 606.9h0M1267.4 617.4h0M1195.2 615.1h0M1245.2 623.9h0M1182.3 614.9h0M1198.1 605.4h0M1202.6 605.1h0M1253.6 621.1h0M1252.1 627.2h0M1257.3 616.5h0M1207.0 634.0h0M1256.6 628.3h0M1196.8 605.2h0M1203.8 612.3h0M1251.1 616.8h0M1266.7 603.8h0M1263.8 620.1h0M1271.7 608.1h0M1205.5 616.0h0M1219.5 609.7h0M1251.3 607.5h0M1204.2 610.1h0M1189.3 609.6h0M1192.9 619.0h0M1260.0 611.7h0M1261.3 612.1h0M1258.5 608.9h0M1265.8 599.7h0M1259.3 615.1h0M1202.2 611.2h0M1185.7 616.8h0M1192.4 622.0h0M1193.1 603.5h0M1276.4 611.2h0M1200.2 630.6h0M1269.7 622.7h0M1183.6 609.3h0M1191.9 594.8h0M1200.7 619.4h0M1198.4 612.7h0M1251.8 624.0h0M1186.6 626.5h0M1253.9 621.3h0M1187.5 600.6h0M1262.0 630.8h0M1258.7 609.8h0M1274.5 613.5h0M1263.9 614.8h0M1220.6 606.2h0M1264.4 617.0h0M1257.3 626.4h0M1264.5 621.7h0M1206.4 617.1h0M1192.1 627.6h0M1196.1 613.0h0M1179.7 636.4h0M1251.7 622.6h0M1194.8 633.8h0M1275.4 624.7h0M1202.3 618.7h0M1219.0 631.6h0M1269.1 619.6h0M1259.2 617.2h0M1183.7 632.5h0M1250.1 602.2h0M1272.8 623.9h0M1253.3 595.1h0M1258.7 577.7h0M1185.1 636.2h0M1194.1 617.4h0M1260.3 614.1h0M1198.5 607.3h0M1195.9 608.5h0M1258.6 632.2h0M1267.6 610.2h0M1198.7 625.0h0M1195.0 612.1h0M1271.3 597.7h0M1272.6 607.6h0M1191.7 620.2h0M1184.3 612.5h0M1255.2 619.9h0M1266.4 606.8h0M1193.3 620.5h0M1264.6 610.7h0M1204.8 609.3h0M1192.9 625.2h0M1253.3 647.5h0M1204.0 608.2h0M1190.4 600.2h0M1205.3 607.4h0M1197.9 628.7h0M1204.7 631.2h0M1263.9 612.5h0M1198.0 623.2h0M1176.4 624.1h0M1195.6 611.5h0M1272.9 610.9h0M1208.7 611.7h0M1194.0 630.7h0M1190.9 607.2h0M1194.7 625.4h0M1254.1 633.4h0M1280.1 620.3h0M1279.9 617.4h0M1280.1 628.7h0M1268.2 605.1h0M1183.0 616.1h0M1257.9 619.7h0M1189.1 616.8h0M1191.8 598.0h0M1274.3 627.1h0M1257.8 616.1h0M1193.2 629.9h0M1270.5 603.7h0M1242.2 612.5h0M1192.9 621.6h0M1273.9 603.8h0M1185.2 623.8h0M1269.3 625.8h0M1266.4 615.6h0M1184.0 603.5h0M1202.6 615.8h0M1191.3 616.9h0M1181.4 613.9h0M1262.3 639.4h0M1188.4 623.5h0M1270.0 603.5h0M1269.4 615.8h0M1279.9 614.0h0M1188.3 622.1h0M1266.4 606.2h0M1272.1 622.6h0M1217.3 612.7h0" stroke="#fbe766" stroke-opacity="0.8" stroke-width="4.3" stroke-linecap="round" fill="none"/><path d="M1276.6 624.3h0M1200.4 628.2h0M1266.2 611.8h0M1268.9 600.5h0M1191.1 632.6h0M1200.9 617.2h0M1192.9 593.7h0M1190.7 609.3h0M1260.5 619.8h0M1189.8 593.5h0M1195.0 620.3h0M1257.8 625.0h0M1240.3 614.4h0M1167.0 604.1h0M1189.5 615.1h0M1185.8 634.6h0M1254.6 608.3h0M1190.8 623.5h0M1271.2 616.1h0M1274.2 602.5h0M1278.3 612.1h0M1190.8 619.0h0M1194.7 607.4h0M1258.0 605.2h0M1246.3 614.1h0M1178.9 626.2h0M1274.4 612.2h0M1262.9 611.7h0M1197.4 596.9h0M1271.1 640.0h0M1199.8 586.1h0M1269.1 614.1h0M1202.1 610.3h0M1197.2 617.8h0M1177.4 612.3h0M1256.6 642.5h0M1183.9 628.6h0M1198.7 611.5h0M1189.3 639.8h0M1278.1 621.4h0M1259.7 620.8h0M1261.7 618.4h0M1204.1 619.5h0M1196.1 619.0h0M1201.3 615.4h0M1258.4 616.2h0M1200.0 617.2h0M1261.2 609.9h0M1253.6 632.0h0M1185.6 604.9h0M1267.4 620.6h0M1195.1 621.1h0M1258.6 614.3h0M1252.1 631.8h0M1251.9 611.9h0M1187.7 635.7h0M1194.1 612.8h0M1270.9 610.7h0M1270.8 604.4h0M1261.9 606.3h0M1197.1 610.9h0M1282.2 603.3h0M1263.2 610.7h0M1263.4 638.4h0M1199.9 614.2h0M1194.3 617.5h0M1204.3 609.5h0M1256.5 600.7h0M1270.5 604.4h0M1261.8 625.9h0M1213.6 614.5h0M1278.2 614.3h0M1194.9 614.8h0M1269.9 615.9h0M1266.4 606.0h0M1261.3 628.0h0M1271.9 610.5h0M1186.2 613.7h0M1208.4 613.9h0M1199.9 597.1h0M1195.3 627.7h0M1201.6 610.9h0M1257.8 620.7h0M1260.3 617.9h0M1179.5 595.2h0M1191.1 614.0h0M1167.8 614.1h0M1250.9 605.9h0M1187.9 619.0h0M1262.8 635.3h0M1280.7 609.7h0M1262.9 616.9h0M1213.9 609.4h0M1264.6 624.8h0M1185.4 596.7h0M1198.2 604.4h0M1246.6 602.8h0M1254.4 611.0h0M1194.3 598.8h0M1199.6 621.0h0M1264.2 622.2h0M1270.9 615.8h0M1203.7 588.4h0M1184.0 635.7h0M1261.3 613.5h0M1194.3 616.5h0M1180.6 611.4h0M1193.9 605.9h0M1185.0 585.6h0M1185.4 617.4h0M1262.8 618.3h0M1277.2 632.4h0M1188.4 611.6h0M1264.0 618.3h0M1263.4 606.6h0M1182.7 612.1h0M1203.8 624.3h0M1261.1 594.7h0M1267.5 617.6h0M1254.7 604.9h0M1263.7 608.4h0M1269.2 587.9h0M1198.9 615.3h0M1268.6 614.6h0M1257.2 597.2h0M1251.8 606.2h0M1187.8 611.1h0M1193.8 614.4h0M1254.7 604.1h0M1190.0 613.6h0M1268.8 618.6h0M1265.5 617.0h0M1181.1 606.3h0M1186.1 610.3h0M1264.1 628.9h0M1251.0 608.5h0M1253.2 619.9h0M1258.1 621.0h0M1203.1 613.7h0M1271.8 625.4h0M1194.0 620.2h0M1260.0 613.6h0M1272.7 628.2h0M1179.7 613.6h0M1178.9 601.2h0M1262.6 617.7h0M1200.0 624.7h0M1276.8 644.6h0M1175.2 631.0h0M1194.3 619.1h0M1203.9 624.4h0M1265.7 602.3h0M1196.0 625.9h0M1273.5 605.8h0M1263.5 616.5h0M1270.1 613.0h0M1199.5 587.2h0M1267.0 621.5h0M1180.5 628.3h0M1190.0 638.4h0M1194.0 616.8h0M1259.3 617.6h0M1182.6 613.7h0M1198.4 600.4h0M1186.2 610.2h0M1182.9 623.6h0M1206.1 606.3h0M1200.1 619.0h0M1183.9 607.9h0M1191.6 622.7h0M1181.4 644.6h0M1279.0 619.7h0M1184.8 600.9h0M1264.3 604.3h0M1267.3 612.4h0M1209.0 613.3h0M1196.5 621.9h0M1216.8 619.5h0M1187.3 627.5h0M1205.9 618.3h0M1267.4 614.2h0M1250.3 614.2h0M1270.2 621.8h0M1194.1 604.1h0M1183.5 617.3h0M1275.6 627.1h0M1261.1 626.2h0M1277.0 621.9h0M1198.0 625.4h0M1198.7 609.6h0M1187.7 609.4h0M1200.0 599.5h0M1183.1 597.6h0M1271.4 623.3h0M1189.0 610.8h0M1187.0 611.3h0M1182.8 617.7h0M1194.7 622.5h0M1191.3 608.3h0M1243.9 598.3h0M1254.2 615.6h0M1269.9 614.8h0M1262.4 610.5h0M1173.5 606.7h0M1239.5 602.7h0M1170.0 604.4h0M1256.7 608.0h0M1199.6 615.0h0M1262.6 584.5h0M1191.1 623.1h0M1203.1 631.8h0M1265.9 604.9h0M1197.2 567.1h0M1252.5 638.9h0M1268.8 613.4h0M1200.3 626.1h0M1179.5 614.5h0M1186.5 618.1h0M1178.9 609.3h0M1209.7 612.6h0M1212.4 637.3h0M1259.4 606.9h0M1252.6 605.2h0M1199.4 623.7h0M1203.5 624.1h0M1268.8 621.9h0M1256.1 612.9h0M1266.8 619.1h0M1198.7 614.2h0M1185.5 611.0h0M1248.9 630.5h0M1183.4 611.0h0M1273.6 624.6h0M1196.2 618.4h0M1186.9 609.3h0M1241.6 609.0h0M1265.3 630.1h0M1270.0 604.9h0M1191.0 615.4h0M1192.9 618.0h0M1267.2 610.7h0M1194.3 625.1h0M1189.8 617.6h0M1176.6 616.8h0M1264.2 584.6h0M1195.4 633.3h0M1272.8 603.7h0M1269.7 628.9h0M1208.1 612.5h0M1210.0 599.3h0M1271.3 619.0h0M1259.7 615.7h0M1265.0 608.8h0M1283.7 618.4h0M1199.1 617.7h0M1194.7 591.0h0M1259.6 594.5h0M1182.7 626.4h0M1182.8 636.9h0M1263.3 610.2h0M1252.2 597.5h0M1242.8 605.4h0M1252.2 622.9h0M1248.9 601.8h0M1248.3 616.4h0M1192.9 609.3h0M1257.7 606.8h0M1262.4 616.5h0M1212.3 601.9h0M1196.9 616.6h0M1193.1 625.4h0M1195.7 618.8h0M1259.1 598.4h0M1258.2 618.6h0M1254.7 615.4h0M1265.2 610.3h0M1264.4 597.7h0M1273.6 614.0h0M1277.5 614.0h0M1269.3 625.5h0M1253.9 610.0h0M1199.8 588.8h0M1192.0 626.6h0M1263.3 611.3h0M1177.3 619.8h0M1267.4 604.7h0M1277.4 603.5h0M1279.0 615.5h0M1244.4 612.5h0M1262.0 635.2h0M1182.9 626.4h0M1204.8 607.8h0M1193.8 613.9h0M1270.0 613.9h0M1189.2 643.4h0M1188.0 627.8h0M1248.0 611.1h0M1181.6 620.5h0M1202.1 612.8h0M1276.5 619.3h0M1283.0 607.8h0M1206.9 612.4h0M1263.7 605.6h0M1259.4 612.4h0M1271.9 636.6h0M1192.1 596.6h0M1190.7 617.6h0M1186.6 620.6h0M1216.4 628.8h0M1284.6 615.4h0M1197.2 625.6h0M1188.2 589.5h0M1188.5 614.9h0M1263.3 609.6h0M1253.3 615.1h0M1208.2 615.9h0M1181.6 617.8h0M1209.0 629.3h0M1264.0 624.7h0M1205.4 625.5h0M1252.8 644.2h0M1187.1 632.0h0M1191.8 610.7h0M1253.0 591.0h0M1201.0 612.0h0M1190.9 614.7h0M1201.5 634.1h0M1182.6 609.9h0M1189.4 613.8h0M1184.4 618.4h0M1271.1 611.0h0M1268.6 622.9h0M1260.4 614.1h0M1198.0 624.0h0M1257.4 609.5h0M1187.7 612.5h0M1263.0 609.1h0M1254.8 624.9h0M1193.9 607.9h0M1260.6 616.4h0M1256.9 604.6h0M1260.1 605.2h0M1205.2 628.9h0M1206.4 628.4h0M1191.8 602.1h0M1262.3 644.8h0M1265.9 611.9h0M1179.9 620.2h0M1182.7 608.8h0M1256.0 630.8h0M1199.7 615.0h0M1194.4 636.2h0M1278.1 631.4h0M1194.7 603.4h0M1201.2 614.4h0M1214.9 589.2h0M1187.5 625.1h0M1261.6 613.7h0M1203.7 613.1h0M1203.6 599.5h0M1268.5 606.3h0M1247.4 617.6h0M1269.8 631.9h0M1183.9 616.5h0M1188.4 616.4h0M1289.3 614.6h0M1271.3 610.7h0M1193.3 607.1h0M1277.5 623.6h0M1180.7 626.8h0M1194.5 605.2h0M1264.0 620.0h0M1196.8 619.7h0M1180.9 626.1h0M1255.3 610.4h0M1270.7 609.8h0M1208.6 604.1h0M1180.0 599.2h0M1201.2 633.9h0M1287.8 625.5h0M1178.1 597.1h0M1190.1 625.7h0M1193.2 614.3h0M1189.9 612.8h0M1271.6 622.0h0M1189.5 615.0h0M1264.1 612.5h0M1187.2 617.9h0M1193.7 613.4h0M1200.2 599.0h0M1198.4 614.4h0M1257.1 606.4h0M1256.4 612.4h0M1195.3 617.5h0M1271.6 616.9h0M1272.3 612.5h0M1279.1 621.5h0M1208.5 619.3h0M1251.5 630.7h0M1201.6 614.3h0M1177.6 609.1h0M1286.0 613.4h0M1265.8 613.6h0M1259.1 610.7h0M1254.1 595.9h0M1193.2 616.4h0M1183.1 608.2h0M1195.6 610.9h0M1200.9 601.9h0M1186.9 599.6h0M1183.8 613.2h0M1197.5 604.8h0M1263.0 627.3h0M1183.5 603.2h0M1185.6 611.2h0M1188.5 618.7h0M1204.0 617.2h0M1262.2 618.5h0M1247.0 608.2h0M1261.6 616.5h0M1202.7 640.4h0M1260.4 607.3h0M1261.2 621.5h0M1186.7 629.1h0M1195.8 621.8h0M1256.7 632.8h0M1191.6 608.5h0M1270.0 603.1h0M1270.7 620.1h0M1268.4 630.4h0M1247.0 604.6h0M1264.2 634.8h0M1266.3 612.6h0M1187.4 605.0h0M1182.5 609.4h0M1267.5 605.8h0M1197.2 630.8h0M1192.1 602.8h0M1278.4 596.3h0M1215.7 606.4h0M1267.8 620.7h0M1267.5 622.2h0M1188.7 591.0h0M1249.9 625.0h0M1186.1 628.5h0M1199.5 615.6h0M1197.0 615.0h0M1199.0 613.2h0M1254.2 628.2h0M1205.0 615.5h0M1273.4 618.4h0M1191.4 612.5h0M1196.7 624.2h0M1196.0 593.1h0M1199.0 614.0h0M1194.0 618.6h0M1264.8 611.2h0M1245.6 612.0h0M1204.1 594.8h0M1204.9 616.3h0M1235.1 611.1h0M1204.0 612.8h0M1188.5 589.5h0M1264.1 622.5h0M1283.9 617.3h0M1253.5 617.5h0M1269.9 604.4h0M1251.1 609.4h0M1188.4 608.1h0M1258.2 600.7h0M1277.1 611.1h0M1198.3 607.0h0M1196.3 614.5h0M1262.1 606.8h0M1196.7 616.3h0M1273.5 611.2h0M1275.1 614.3h0M1266.4 605.6h0M1185.8 606.8h0M1260.3 623.0h0M1275.2 576.7h0M1188.6 620.2h0M1262.1 629.0h0M1267.5 629.0h0M1198.3 602.6h0M1205.1 591.4h0M1266.3 595.2h0M1248.8 601.7h0M1189.1 618.2h0M1259.4 617.3h0M1202.7 622.2h0M1261.2 616.4h0M1195.0 632.5h0M1183.3 614.3h0M1192.3 628.7h0M1202.0 610.9h0M1237.0 592.2h0M1270.2 614.9h0M1274.6 621.8h0M1249.8 606.1h0M1204.8 620.9h0M1255.7 635.3h0M1266.4 610.5h0M1248.8 610.4h0M1245.9 614.3h0M1254.1 634.0h0M1196.3 618.6h0M1264.2 616.1h0M1258.0 615.1h0M1255.5 622.6h0M1270.3 599.8h0M1200.5 614.0h0M1274.5 619.9h0M1186.5 624.9h0M1277.2 604.8h0M1243.1 596.2h0M1270.9 605.7h0M1271.9 629.7h0M1262.1 607.5h0M1205.3 598.3h0M1248.9 604.5h0M1264.1 602.5h0M1183.1 596.2h0M1262.8 618.6h0M1210.0 602.6h0M1189.5 599.9h0M1204.8 600.8h0M1264.1 616.6h0M1196.9 603.4h0M1203.3 611.2h0M1191.8 609.0h0M1205.3 606.6h0M1267.3 622.0h0M1193.2 603.7h0M1202.8 581.8h0M1212.4 623.7h0M1200.1 593.2h0M1261.5 602.2h0M1268.9 620.7h0M1184.9 614.3h0M1268.8 616.9h0M1260.5 611.8h0M1265.2 617.2h0M1248.7 615.2h0M1214.4 607.0h0M1195.6 608.3h0M1176.1 613.1h0M1272.5 628.8h0M1259.4 621.2h0M1201.7 605.4h0" stroke="#fbe766" stroke-opacity="0.8" stroke-width="4.3" stroke-linecap="round" fill="none"/><path d="M1264.6 610.8h0M1201.3 620.6h0M1194.4 616.0h0M1264.3 612.0h0M1188.7 609.1h0M1186.9 587.2h0M1259.3 607.7h0M1178.3 612.0h0M1261.3 598.3h0M1264.8 615.0h0M1262.5 612.4h0M1194.9 598.5h0M1188.4 609.4h0M1179.8 605.0h0M1259.0 607.8h0M1256.7 618.8h0M1254.6 617.9h0M1279.0 609.6h0M1193.5 620.0h0M1281.0 612.1h0M1181.6 624.1h0M1275.7 603.7h0M1244.6 622.3h0M1270.9 599.1h0M1263.6 618.5h0M1197.4 601.1h0M1272.1 632.2h0M1259.4 614.2h0M1260.9 604.7h0M1266.0 632.2h0M1254.9 617.3h0M1191.7 605.1h0M1252.6 613.6h0M1276.9 599.0h0M1267.8 621.7h0M1196.6 610.3h0M1191.9 614.4h0M1203.1 628.8h0M1259.2 631.8h0M1205.3 623.8h0M1253.4 612.7h0M1261.8 604.7h0M1265.4 600.3h0M1275.1 615.2h0M1287.4 607.4h0M1195.1 618.1h0M1260.9 623.9h0M1276.0 631.0h0M1269.2 605.0h0M1197.6 614.5h0M1257.9 626.7h0M1256.4 612.5h0M1202.3 616.5h0M1282.5 618.9h0M1184.1 614.6h0M1257.2 610.9h0M1204.2 603.6h0M1196.6 621.0h0M1195.0 622.9h0M1262.8 615.7h0M1199.9 633.4h0M1269.3 609.7h0M1256.6 623.1h0M1183.9 617.6h0M1188.4 612.3h0M1208.7 617.2h0M1199.1 602.1h0M1281.3 606.0h0M1183.6 615.3h0M1198.7 603.9h0M1264.4 619.8h0M1257.1 612.1h0M1185.5 618.4h0M1263.8 605.7h0M1263.3 614.4h0M1258.2 616.3h0M1194.1 628.4h0M1190.3 599.8h0M1222.4 626.4h0M1267.8 598.8h0M1202.5 603.8h0M1256.8 617.5h0M1190.3 611.4h0M1201.5 613.2h0M1259.0 622.2h0M1272.7 610.0h0M1269.4 604.2h0M1203.2 618.8h0M1191.6 615.0h0M1259.3 607.3h0M1274.0 616.5h0M1273.0 609.8h0M1189.4 633.3h0M1254.5 599.7h0M1203.2 627.0h0M1200.5 609.3h0M1264.6 606.4h0M1187.5 610.0h0M1281.6 629.4h0M1252.8 615.5h0M1264.2 608.7h0M1254.0 605.8h0M1192.7 612.3h0M1185.3 621.5h0M1257.0 618.8h0M1261.9 601.5h0M1270.9 612.3h0M1269.3 615.7h0M1262.3 616.1h0M1254.9 634.3h0M1208.5 629.8h0M1279.4 610.9h0M1200.2 609.1h0M1201.3 609.2h0M1262.2 633.1h0M1272.6 607.2h0M1268.7 625.5h0M1177.7 610.2h0M1204.5 633.2h0M1274.4 617.3h0M1265.5 617.9h0M1162.3 643.9h0M1264.2 624.6h0M1193.5 621.1h0M1190.0 649.2h0M1251.0 615.5h0M1287.4 600.4h0M1191.2 620.9h0M1263.9 610.3h0M1264.0 593.8h0M1264.9 617.7h0M1252.4 606.8h0M1264.9 609.5h0M1191.7 597.2h0M1263.8 622.5h0M1249.7 620.7h0M1244.4 613.5h0M1204.2 607.8h0M1261.4 619.0h0M1251.0 618.2h0M1195.9 603.0h0M1196.6 628.7h0M1199.9 622.7h0M1200.9 634.2h0M1275.4 610.9h0M1263.2 613.1h0M1202.1 604.6h0M1266.0 619.0h0M1192.5 619.4h0M1265.0 601.4h0M1252.9 609.0h0M1256.1 617.8h0M1211.4 603.2h0M1269.4 607.0h0M1177.4 612.7h0M1191.2 642.3h0M1182.8 611.4h0M1198.6 619.8h0M1195.3 627.8h0M1200.3 631.0h0M1261.3 612.6h0M1187.5 619.7h0M1245.6 606.9h0M1257.3 620.1h0M1193.2 619.0h0M1263.8 606.2h0M1264.1 601.5h0M1255.2 608.1h0M1200.2 636.1h0M1196.5 603.2h0M1182.4 604.2h0M1207.7 625.8h0M1267.9 619.6h0M1267.8 615.5h0M1197.8 620.8h0M1190.4 623.0h0M1219.3 619.0h0M1194.0 623.9h0M1173.1 606.4h0M1193.4 603.9h0M1186.2 597.7h0M1197.3 621.1h0M1203.0 619.3h0M1270.5 608.5h0M1190.2 590.7h0M1187.9 607.3h0M1271.1 618.0h0M1254.2 608.9h0M1262.3 607.9h0M1179.9 619.6h0M1249.4 609.1h0M1186.8 618.1h0M1207.1 636.5h0M1190.0 645.2h0M1181.5 603.9h0M1199.3 630.1h0M1256.4 628.1h0M1250.9 617.3h0M1188.6 642.3h0M1255.3 625.0h0M1193.9 618.4h0M1197.9 601.9h0M1194.8 610.9h0M1192.6 601.3h0M1266.4 629.8h0M1189.2 603.6h0M1281.0 618.0h0M1210.2 612.0h0M1257.7 619.6h0M1269.3 607.6h0M1202.6 619.6h0M1267.4 633.0h0M1253.1 600.0h0M1279.1 606.3h0M1269.0 622.6h0M1268.6 601.2h0M1266.7 598.7h0M1282.4 616.1h0M1274.1 618.1h0M1276.0 620.0h0M1193.1 629.5h0M1212.5 628.1h0M1272.8 604.8h0M1209.0 596.7h0M1194.0 616.3h0M1262.7 612.0h0M1246.9 609.9h0M1182.6 627.3h0M1185.0 629.2h0M1265.2 618.7h0M1196.5 606.8h0M1196.0 624.4h0M1260.9 601.7h0M1191.6 618.2h0M1270.7 611.8h0M1272.2 616.0h0M1258.2 635.3h0M1206.3 620.0h0M1197.9 611.7h0M1272.5 608.0h0M1200.6 621.3h0M1211.0 616.5h0M1258.1 627.9h0M1260.8 612.5h0M1180.2 629.5h0M1263.2 602.3h0M1193.6 620.9h0M1184.1 608.6h0M1184.6 606.1h0M1258.8 607.6h0M1204.4 610.5h0M1193.0 607.1h0M1208.6 607.5h0M1258.6 620.9h0M1194.4 606.1h0M1191.3 614.4h0M1255.4 600.3h0M1200.7 644.3h0M1264.0 598.3h0M1183.2 613.4h0M1192.0 599.0h0M1186.1 596.2h0M1256.5 630.9h0M1274.8 595.0h0M1268.4 616.0h0M1195.4 629.3h0M1182.3 622.6h0M1280.6 602.7h0M1209.1 608.4h0M1273.4 604.2h0M1260.3 613.7h0M1192.7 604.4h0M1192.1 621.6h0M1175.2 595.6h0M1197.5 628.1h0M1257.5 619.0h0M1280.8 621.5h0M1179.2 592.6h0M1203.4 622.5h0M1188.9 613.7h0M1244.1 631.2h0M1185.9 623.8h0M1219.0 612.0h0M1196.3 603.1h0M1264.0 598.2h0M1198.7 623.4h0M1198.7 617.3h0M1256.1 627.0h0M1187.7 620.6h0M1200.4 627.0h0M1245.8 605.2h0M1268.9 612.9h0M1262.9 619.1h0M1254.3 614.4h0M1263.6 631.0h0M1196.9 622.5h0M1248.8 604.3h0M1262.0 615.2h0M1254.4 611.3h0M1200.1 616.1h0M1182.8 614.1h0M1184.0 611.8h0M1267.7 601.2h0M1265.8 624.2h0M1268.3 616.0h0M1184.6 601.5h0M1190.6 608.1h0M1249.3 613.9h0M1268.2 615.2h0M1260.7 609.1h0M1279.5 611.2h0M1195.5 640.4h0M1190.7 621.7h0M1200.8 634.6h0M1197.0 611.1h0M1252.8 602.8h0M1283.0 625.3h0M1260.2 632.0h0M1254.0 605.5h0M1271.7 600.1h0M1178.4 626.2h0M1200.7 619.4h0M1195.5 600.4h0M1267.1 616.1h0M1259.9 632.9h0M1196.4 613.6h0M1185.2 602.1h0M1280.4 614.8h0M1198.3 615.3h0M1265.0 606.1h0M1188.0 612.8h0M1202.4 630.6h0M1201.2 616.6h0M1204.0 636.6h0M1195.7 620.4h0M1263.0 589.3h0M1199.3 609.9h0M1269.1 625.1h0M1261.1 605.9h0M1276.4 625.3h0M1193.1 631.3h0M1193.7 618.7h0M1187.3 615.8h0M1194.3 631.9h0M1195.1 615.9h0M1194.1 616.8h0M1272.6 629.9h0M1269.1 606.4h0M1258.7 622.4h0M1263.6 615.3h0M1197.3 592.9h0M1249.2 621.8h0M1193.2 619.4h0M1196.3 614.5h0M1263.2 616.2h0M1188.3 596.4h0M1255.3 609.2h0M1254.1 614.8h0M1270.8 604.7h0M1197.7 609.2h0M1265.9 611.1h0M1281.8 615.0h0M1189.1 615.0h0M1258.6 625.8h0M1263.2 622.7h0M1271.1 613.2h0M1195.9 626.4h0M1191.7 619.7h0M1203.4 612.9h0M1266.6 618.7h0M1185.1 607.4h0M1196.7 594.1h0M1199.5 618.6h0M1255.6 615.0h0M1259.9 606.6h0M1271.2 610.5h0M1269.5 598.0h0M1200.4 613.6h0M1189.7 609.4h0M1251.7 618.8h0M1173.4 617.8h0M1276.4 620.3h0M1267.6 617.0h0M1193.6 630.2h0M1189.9 616.6h0M1248.9 616.8h0M1263.3 622.1h0M1267.1 603.7h0M1185.8 618.3h0M1192.6 617.9h0M1201.9 617.7h0M1208.9 620.8h0M1255.6 611.7h0M1186.4 614.2h0M1267.1 601.6h0M1269.8 616.4h0M1270.7 614.5h0M1263.9 604.3h0M1257.9 608.5h0M1253.2 615.4h0M1275.3 596.1h0M1205.5 632.7h0M1185.6 619.8h0M1248.5 613.5h0M1203.1 613.4h0M1187.1 621.2h0M1275.5 618.6h0M1205.5 611.0h0M1251.0 610.8h0M1264.8 618.3h0M1204.4 619.9h0M1260.2 631.5h0M1202.3 623.0h0M1263.8 610.8h0M1253.2 624.0h0M1257.5 608.4h0M1271.9 605.7h0M1264.4 619.7h0M1250.7 626.1h0M1201.8 613.6h0M1188.1 601.1h0M1272.6 596.1h0M1238.9 620.3h0M1269.2 604.6h0M1190.6 605.7h0M1268.0 628.6h0M1182.9 600.7h0M1194.0 614.1h0M1288.6 607.0h0M1194.2 623.0h0M1192.5 623.7h0M1187.5 629.4h0M1190.6 611.6h0M1190.6 611.3h0M1192.9 626.8h0M1263.4 592.8h0M1201.2 602.6h0M1196.6 629.2h0M1212.6 625.8h0M1260.0 598.7h0M1197.9 609.8h0M1202.0 605.5h0M1260.7 619.3h0M1194.5 592.3h0M1249.6 608.0h0M1260.7 626.2h0M1204.8 624.2h0M1244.1 625.9h0M1204.3 607.1h0M1267.6 629.5h0M1261.4 607.3h0M1259.0 619.0h0M1197.3 619.5h0M1267.3 615.0h0M1210.6 629.8h0M1269.5 624.7h0M1256.3 614.9h0M1202.6 621.0h0M1277.4 603.5h0M1261.5 610.5h0M1279.2 615.4h0M1255.7 621.6h0M1276.0 621.7h0M1255.0 601.1h0M1192.8 615.0h0M1204.0 600.6h0M1210.5 621.6h0M1190.2 638.7h0M1250.8 617.3h0M1258.7 609.9h0M1255.5 614.4h0M1193.0 612.8h0M1256.0 606.3h0M1210.5 608.3h0M1266.7 627.7h0M1194.5 599.2h0M1267.9 605.2h0M1267.2 614.9h0M1166.2 618.8h0M1188.2 619.5h0M1207.1 606.6h0M1276.8 620.3h0M1196.2 609.6h0M1255.9 628.0h0M1277.6 614.7h0M1195.2 604.6h0M1262.0 614.7h0M1251.0 619.6h0M1257.9 589.9h0M1181.2 625.9h0M1196.7 614.5h0M1276.7 614.7h0M1268.0 628.7h0M1264.0 614.3h0M1187.5 620.1h0M1267.3 625.5h0M1275.6 616.4h0M1205.2 618.7h0M1275.7 614.3h0M1257.8 617.5h0M1198.8 633.5h0M1275.1 626.6h0M1185.0 618.7h0M1270.7 617.7h0M1204.6 628.6h0M1272.0 616.0h0M1195.4 626.4h0M1267.2 630.4h0M1264.6 614.4h0M1264.0 605.9h0M1183.9 603.2h0M1275.0 612.8h0M1209.7 613.0h0M1257.5 618.4h0M1187.3 607.9h0M1191.9 615.9h0M1194.2 621.1h0M1257.6 605.1h0M1264.0 612.7h0M1201.8 608.7h0M1180.4 632.1h0M1255.3 612.0h0M1180.0 603.9h0M1265.5 611.4h0M1188.5 617.5h0M1257.1 597.3h0M1265.2 616.3h0M1251.7 615.6h0M1255.0 622.8h0M1282.9 607.1h0M1253.3 628.9h0M1209.6 612.6h0M1247.1 627.5h0M1204.6 627.4h0M1263.9 600.7h0M1256.9 613.4h0M1195.6 610.1h0M1254.6 618.3h0M1210.6 632.9h0M1266.5 601.7h0M1269.1 629.5h0M1260.2 613.3h0M1200.8 632.4h0M1264.4 608.3h0M1266.1 617.1h0M1255.4 626.2h0M1190.6 607.6h0M1198.0 610.2h0M1271.3 619.0h0M1264.0 632.9h0" stroke="#fbe766" stroke-opacity="0.8" stroke-width="4.3" stroke-linecap="round" fill="none"/><path d="M1203.9 602.0h0M1268.6 606.0h0M1277.9 607.1h0M1262.2 631.2h0M1193.8 610.7h0M1187.4 617.4h0M1208.1 617.6h0M1267.2 601.1h0M1263.8 606.0h0M1278.5 619.8h0M1262.9 601.0h0M1255.8 618.1h0M1274.8 631.8h0M1209.4 619.4h0M1257.4 646.0h0M1203.5 608.8h0M1261.7 623.4h0M1198.3 599.3h0M1262.9 624.3h0M1201.9 626.5h0M1191.9 622.9h0M1270.3 604.8h0M1269.4 615.8h0M1181.3 588.5h0M1276.6 615.2h0M1266.0 623.3h0M1195.9 609.1h0M1257.8 614.2h0M1174.7 607.8h0M1209.2 624.5h0M1232.7 616.4h0M1208.9 611.4h0M1254.5 598.3h0M1255.4 618.6h0M1202.0 631.4h0M1261.1 600.9h0M1269.3 623.1h0M1193.1 618.1h0M1259.1 641.9h0M1261.6 609.3h0M1185.3 628.7h0M1204.8 611.0h0M1188.0 608.6h0M1181.8 624.9h0M1265.8 603.5h0M1201.1 632.3h0M1256.7 617.1h0M1256.3 628.8h0M1190.1 615.1h0M1185.4 614.1h0M1201.3 631.3h0M1259.6 612.3h0M1246.9 611.5h0M1200.3 611.9h0M1264.4 608.9h0M1185.5 638.8h0M1192.7 616.5h0M1207.3 616.8h0M1200.2 610.1h0M1259.4 621.3h0M1250.5 616.0h0M1269.9 622.7h0M1270.1 609.3h0M1203.7 612.4h0M1253.3 608.4h0M1200.3 604.5h0M1259.6 625.0h0M1199.9 625.5h0M1206.5 619.5h0M1270.8 632.9h0M1268.4 610.9h0M1195.7 603.0h0M1202.9 628.0h0M1194.8 608.3h0M1179.2 628.1h0M1276.5 602.1h0M1198.7 623.2h0M1275.3 606.4h0M1202.3 627.6h0M1264.7 602.0h0M1274.9 617.5h0M1194.2 610.7h0M1271.8 621.7h0M1184.9 624.0h0M1180.0 618.7h0M1272.0 618.6h0M1202.8 613.9h0M1190.8 613.2h0M1193.7 617.7h0M1259.2 610.8h0M1187.0 617.3h0M1196.6 623.8h0M1254.8 611.5h0M1202.8 602.6h0M1271.1 609.5h0M1201.8 615.4h0M1266.0 621.4h0M1194.7 623.2h0M1284.5 603.2h0M1190.7 609.8h0M1270.0 629.6h0M1269.2 613.7h0M1193.2 612.3h0M1179.9 610.6h0M1263.9 626.8h0M1189.8 594.8h0M1270.4 615.5h0M1194.7 619.8h0M1274.9 617.0h0M1268.3 613.2h0M1271.0 617.8h0M1270.5 605.4h0M1277.1 609.9h0M1197.5 623.5h0M1197.7 605.2h0M1270.4 605.3h0M1258.1 622.1h0M1271.8 608.1h0M1205.1 618.4h0M1253.0 614.9h0M1193.7 623.9h0M1191.2 621.5h0M1182.5 607.5h0M1186.7 646.9h0M1265.3 623.7h0M1183.0 603.7h0M1187.4 628.0h0M1266.4 613.3h0M1196.3 605.0h0M1203.1 619.6h0M1191.5 623.9h0M1263.7 630.5h0M1187.1 619.4h0M1186.9 618.2h0M1253.8 620.7h0M1259.1 636.3h0M1266.9 612.0h0M1255.9 617.8h0M1205.2 607.5h0M1196.9 621.0h0M1276.0 617.6h0M1259.9 611.7h0M1260.0 601.5h0M1255.4 614.4h0M1281.6 620.9h0M1187.5 617.3h0M1254.2 627.4h0M1244.0 614.1h0M1191.7 609.1h0M1182.1 611.0h0M1208.4 613.0h0M1185.1 614.6h0M1190.3 619.9h0M1205.5 603.9h0M1252.6 613.7h0M1178.8 603.9h0M1199.3 601.1h0M1265.7 620.4h0M1191.0 611.9h0M1192.4 632.1h0M1269.1 617.8h0M1188.1 625.0h0M1204.0 626.2h0M1243.3 609.4h0M1199.3 619.6h0M1255.4 618.8h0M1260.9 607.6h0M1263.1 635.0h0M1201.9 615.9h0M1192.9 624.9h0M1192.6 618.5h0M1207.7 599.8h0M1188.2 603.7h0M1249.9 622.8h0M1197.9 624.2h0M1195.7 619.3h0M1246.7 625.4h0M1255.7 606.3h0M1269.9 615.0h0M1258.4 623.4h0M1264.0 599.6h0M1258.8 607.0h0M1205.3 611.1h0M1257.8 617.3h0M1254.3 603.7h0M1200.1 609.2h0M1201.1 623.9h0M1252.9 608.8h0M1261.6 625.1h0M1189.4 601.3h0M1244.2 616.7h0M1179.8 609.4h0M1204.0 625.2h0M1215.5 618.2h0M1256.9 605.3h0M1189.4 597.0h0M1272.2 621.3h0M1190.7 600.1h0M1192.3 611.6h0M1191.8 616.3h0M1189.3 603.2h0M1206.6 622.6h0M1265.5 627.0h0M1179.7 626.1h0M1269.5 604.8h0M1250.5 622.9h0M1183.9 597.8h0M1192.7 598.4h0M1197.8 621.9h0M1175.6 622.8h0M1181.8 630.2h0M1199.5 600.3h0M1269.1 602.7h0M1206.3 620.0h0M1262.5 618.0h0M1265.2 617.0h0M1273.2 618.2h0M1264.1 608.4h0M1256.2 607.4h0M1270.1 585.3h0M1264.2 605.1h0M1205.9 610.1h0M1192.4 612.6h0M1265.4 633.7h0M1256.7 616.0h0M1284.4 594.0h0M1275.0 628.9h0M1259.8 607.5h0M1263.5 626.3h0M1252.6 610.2h0M1252.3 592.0h0M1193.7 605.8h0M1266.9 615.6h0M1174.9 612.7h0M1194.8 601.9h0M1191.3 625.3h0M1282.0 627.9h0M1252.3 633.4h0M1201.3 619.9h0M1251.0 623.9h0M1252.7 600.8h0M1256.0 596.0h0M1270.4 636.1h0M1244.7 612.3h0M1175.8 598.2h0M1208.8 604.3h0M1261.4 630.6h0M1198.2 604.8h0M1207.8 605.7h0M1276.2 623.4h0M1281.2 619.2h0M1266.8 615.6h0M1194.9 617.3h0M1204.6 607.4h0M1269.9 607.5h0M1266.2 610.1h0M1264.1 611.3h0M1263.6 619.4h0M1262.8 620.6h0M1264.1 628.2h0M1198.1 593.8h0M1243.3 615.0h0M1194.0 609.8h0M1255.7 601.8h0M1200.3 610.0h0M1181.8 619.4h0M1200.1 624.3h0M1211.8 606.3h0M1201.7 621.0h0M1194.5 601.4h0M1265.6 616.6h0M1268.0 615.7h0M1262.7 631.4h0M1190.2 608.6h0M1250.0 602.5h0M1264.5 608.4h0M1189.7 619.5h0M1179.5 620.5h0M1195.2 607.3h0M1253.4 608.5h0M1271.0 604.9h0M1194.6 619.7h0M1200.6 640.7h0M1259.8 615.5h0M1256.3 615.5h0M1205.2 618.6h0M1199.1 637.4h0M1188.6 628.9h0M1259.4 602.8h0M1270.9 620.3h0M1238.7 587.8h0M1191.2 599.8h0M1194.3 634.7h0M1257.6 606.9h0M1260.8 619.0h0M1251.5 607.1h0M1263.9 621.1h0M1179.6 619.5h0M1251.8 612.9h0M1257.4 616.2h0M1200.4 621.3h0M1272.9 628.2h0M1275.1 609.2h0M1178.0 624.3h0M1193.2 595.8h0M1191.0 603.4h0M1270.4 619.1h0M1264.5 623.1h0M1278.5 616.5h0M1247.2 628.0h0M1257.7 620.1h0M1207.0 612.4h0M1262.6 606.8h0M1258.4 636.3h0M1205.4 621.7h0M1194.4 595.0h0M1251.9 604.1h0M1267.3 610.8h0M1272.0 629.6h0M1267.7 616.4h0M1254.0 601.3h0M1263.9 607.8h0M1268.9 603.8h0M1180.3 627.0h0M1274.0 615.7h0M1200.4 631.8h0M1264.0 608.7h0M1267.5 623.8h0M1279.4 607.9h0M1187.3 623.0h0M1245.1 610.1h0M1249.7 627.2h0M1267.8 618.3h0M1253.6 595.2h0M1196.5 603.1h0M1255.4 618.5h0M1273.9 624.3h0M1185.3 603.1h0M1264.9 610.6h0M1262.6 591.5h0M1197.2 604.9h0M1202.1 598.4h0M1212.6 619.9h0M1212.7 607.7h0M1199.4 611.1h0M1247.1 633.9h0M1270.6 615.6h0M1188.7 613.7h0M1277.9 624.9h0M1196.8 625.4h0M1205.9 614.7h0M1208.0 608.7h0M1186.1 618.6h0M1272.1 622.1h0M1272.0 627.4h0M1202.2 620.2h0M1191.1 622.0h0M1209.2 637.1h0M1266.0 616.7h0M1260.5 618.1h0M1280.0 620.0h0M1201.8 629.2h0M1265.9 619.5h0M1199.9 609.1h0M1250.7 623.5h0M1198.2 625.1h0M1189.4 624.7h0M1189.8 616.8h0M1265.8 615.3h0M1202.0 621.8h0M1191.0 600.0h0M1203.6 616.1h0M1272.7 630.2h0M1261.5 601.8h0M1204.4 619.1h0M1200.1 607.6h0M1276.7 602.4h0M1269.1 619.4h0M1263.5 615.6h0M1194.2 584.9h0M1178.6 620.2h0M1186.3 619.7h0M1263.5 600.8h0M1193.3 605.8h0M1201.1 614.3h0M1187.5 632.7h0M1199.1 613.6h0M1270.0 607.3h0M1201.5 608.4h0M1238.4 614.7h0M1194.6 615.1h0M1198.2 626.1h0M1266.1 612.7h0M1245.4 625.7h0M1196.4 627.2h0M1273.9 632.5h0M1261.1 610.0h0M1260.5 614.6h0M1258.5 642.5h0M1186.0 609.4h0M1266.7 602.6h0M1271.9 620.5h0M1264.1 618.3h0M1192.7 610.6h0M1269.6 632.3h0M1250.7 619.7h0M1197.1 602.9h0M1253.7 614.9h0M1263.0 621.5h0M1205.9 610.4h0M1193.5 593.5h0M1209.9 632.6h0M1265.7 624.7h0M1190.1 616.1h0M1279.5 636.5h0M1267.4 619.1h0M1213.7 634.6h0M1178.0 598.3h0M1201.0 625.9h0M1193.1 636.9h0M1197.4 637.1h0M1259.5 596.2h0M1262.5 619.6h0M1193.1 596.6h0M1196.8 631.8h0M1250.3 609.2h0M1204.3 610.3h0M1259.5 636.5h0M1202.9 612.1h0M1254.0 601.4h0M1267.5 601.3h0M1177.9 630.8h0M1251.9 623.9h0M1247.5 626.5h0M1187.4 612.0h0M1260.6 615.5h0M1191.8 616.4h0M1228.6 603.7h0M1194.6 607.0h0M1273.8 606.6h0M1200.4 610.4h0M1255.8 614.1h0M1189.0 623.6h0M1206.2 621.1h0M1171.7 603.4h0M1244.6 610.1h0M1262.0 600.1h0M1207.4 598.9h0M1273.3 602.7h0M1191.4 615.9h0M1281.6 633.1h0M1244.2 600.7h0M1191.1 613.1h0M1251.7 620.0h0M1203.3 611.2h0M1255.4 635.4h0M1192.1 614.5h0M1174.7 588.8h0M1272.0 616.5h0M1210.4 603.4h0M1195.1 600.5h0M1193.7 626.1h0M1198.2 602.7h0M1267.3 623.5h0M1192.6 613.0h0M1192.9 620.7h0M1186.6 610.6h0M1192.2 631.7h0M1190.9 626.7h0M1265.0 624.2h0M1253.5 600.2h0M1258.7 605.0h0M1194.2 612.6h0M1256.1 609.9h0M1196.7 637.7h0M1190.0 604.0h0M1263.6 603.5h0M1245.9 619.5h0M1184.1 621.6h0M1263.4 610.6h0M1187.1 592.5h0M1188.2 618.9h0M1259.2 617.5h0M1189.5 627.1h0M1251.0 630.3h0M1244.7 616.6h0M1271.3 602.7h0M1187.3 627.6h0M1217.4 609.8h0M1240.2 601.8h0M1188.5 625.9h0M1181.5 620.9h0M1208.3 614.1h0M1184.7 611.3h0M1258.8 633.9h0M1273.6 633.9h0M1251.4 604.6h0M1200.2 635.2h0M1266.0 605.4h0M1277.1 619.9h0M1261.6 633.5h0M1191.6 591.9h0M1179.5 628.5h0M1279.2 607.4h0M1187.6 609.3h0M1261.1 628.3h0M1201.8 627.9h0M1187.9 600.5h0M1271.1 612.0h0M1197.5 627.0h0M1186.7 603.5h0M1196.4 613.1h0M1264.1 628.0h0M1262.3 614.5h0M1246.2 620.2h0M1197.0 623.5h0M1215.9 614.4h0M1178.7 611.8h0M1203.1 614.4h0M1265.9 615.7h0M1243.6 623.6h0M1193.4 629.0h0M1194.6 633.1h0M1266.9 631.5h0M1253.8 623.4h0M1200.9 612.0h0M1264.4 623.2h0M1187.1 607.5h0M1255.6 622.8h0M1206.5 608.3h0M1183.0 599.9h0M1197.9 606.1h0M1201.9 624.5h0M1198.1 617.2h0M1209.3 641.5h0M1246.1 599.2h0M1181.6 618.3h0M1272.7 614.5h0M1193.6 602.3h0M1186.1 617.6h0M1258.4 610.1h0M1271.3 592.7h0M1193.7 625.4h0M1207.1 624.7h0M1200.0 626.8h0M1189.4 615.7h0M1202.4 609.4h0M1268.4 621.1h0M1271.5 600.9h0M1260.8 614.2h0" stroke="#fbe766" stroke-opacity="0.8" stroke-width="4.3" stroke-linecap="round" fill="none"/><path d="M1183.3 614.3000000000001h10M1188.3 609.3000000000001v10" stroke="#ff2a1a" stroke-width="1.4" fill="none"/><path d="M1263.8 614.3000000000001h10M1268.8 609.3000000000001v10" stroke="#ff2a1a" stroke-width="1.4" fill="none"/><path d="M1148.5 732v-6M1148.5 496v6M1188.5 732v-3M1188.5 496v3M1229.5 732v-6M1229.5 496v6M1269.5 732v-3M1269.5 496v3M1309.5 732v-6M1309.5 496v6M1133 714.5h3M1324 714.5h-3M1133 694.5h6M1324 694.5h-6M1133 674.5h3M1324 674.5h-3M1133 654.5h6M1324 654.5h-6M1133 634.5h3M1324 634.5h-3M1133 614.5h6M1324 614.5h-6M1133 594.5h3M1324 594.5h-3M1133 574.5h6M1324 574.5h-6M1133 554.5h3M1324 554.5h-3M1133 534.5h6M1324 534.5h-6M1133 514.5h3M1324 514.5h-3" stroke="#dcdcdc" stroke-width="1" fill="none"/><rect x="1133.5" y="496.5" width="191" height="236" fill="none" stroke="#dcdcdc" stroke-width="1"/></svg>
<span class="t" style="left:1144.13px;top:735.00px;font-size:10.5px;color:#d6d6d6;font-weight:bold;will-change:transform;">-2</span>
<span class="t" style="left:1226.38px;top:735.00px;font-size:10.5px;color:#d6d6d6;font-weight:bold;will-change:transform;">0</span>
<span class="t" style="left:1306.88px;top:735.00px;font-size:10.5px;color:#d6d6d6;font-weight:bold;will-change:transform;">2</span>
<span class="t" style="left:1122.76px;top:527.00px;font-size:10.5px;color:#d6d6d6;font-weight:bold;will-change:transform;">2</span>
<span class="t" style="left:1122.76px;top:567.00px;font-size:10.5px;color:#d6d6d6;font-weight:bold;will-change:transform;">1</span>
<span class="t" style="left:1122.76px;top:607.00px;font-size:10.5px;color:#d6d6d6;font-weight:bold;will-change:transform;">0</span>
<span class="t" style="left:1119.26px;top:647.00px;font-size:10.5px;color:#d6d6d6;font-weight:bold;will-change:transform;">-1</span>
<span class="t" style="left:1119.26px;top:687.00px;font-size:10.5px;color:#d6d6d6;font-weight:bold;will-change:transform;">-2</span>
<span class="t" style="left:1172.80px;top:752.50px;font-size:13px;color:#d4d4d4;-webkit-text-stroke:0.25px currentColor;will-change:transform;">In-phase Amplitude</span>
<span class="t" style="left:1040.96px;top:607.00px;font-size:13px;color:#d4d4d4;transform:rotate(-90deg) scale(0.9963,1);transform-origin:50% 50%;will-change:transform;">Quadrature Amplitude</span>
<div style="position:absolute;left:0px;top:775px;width:1344px;height:22px;background:#e6e6e6;border-top:1px solid #c0c0c0;box-sizing:border-box"></div>
<div style="position:absolute;left:0px;top:58px;width:1px;height:739px;background:#8c8c8c"></div>
<div style="position:absolute;left:337px;top:775px;width:1px;height:22px;background:#c4c4c4"></div>
<svg class="a" style="left:8px;top:781px" width="10" height="12" viewBox="0 0 10 12"><rect x="0" y="0" width="2" height="12" fill="#919191"/><path d="M9 0.3V11.7L1.5 6Z" fill="#919191"/></svg>
<svg class="a" style="left:344px;top:779px" width="16" height="16" viewBox="0 0 16 16"><circle cx="8" cy="8" r="6.8" fill="#d9f5d6" stroke="#22a122" stroke-width="1.2"/><path d="M4.8 8.2L7 10.4L11.2 5.8" fill="none" stroke="#22a122" stroke-width="1.3"/></svg>
<span class="t" style="left:365.50px;top:780.00px;font-size:12px;color:#222;">Completed analysis of WLAN waveform.</span>
</div></body></html>
